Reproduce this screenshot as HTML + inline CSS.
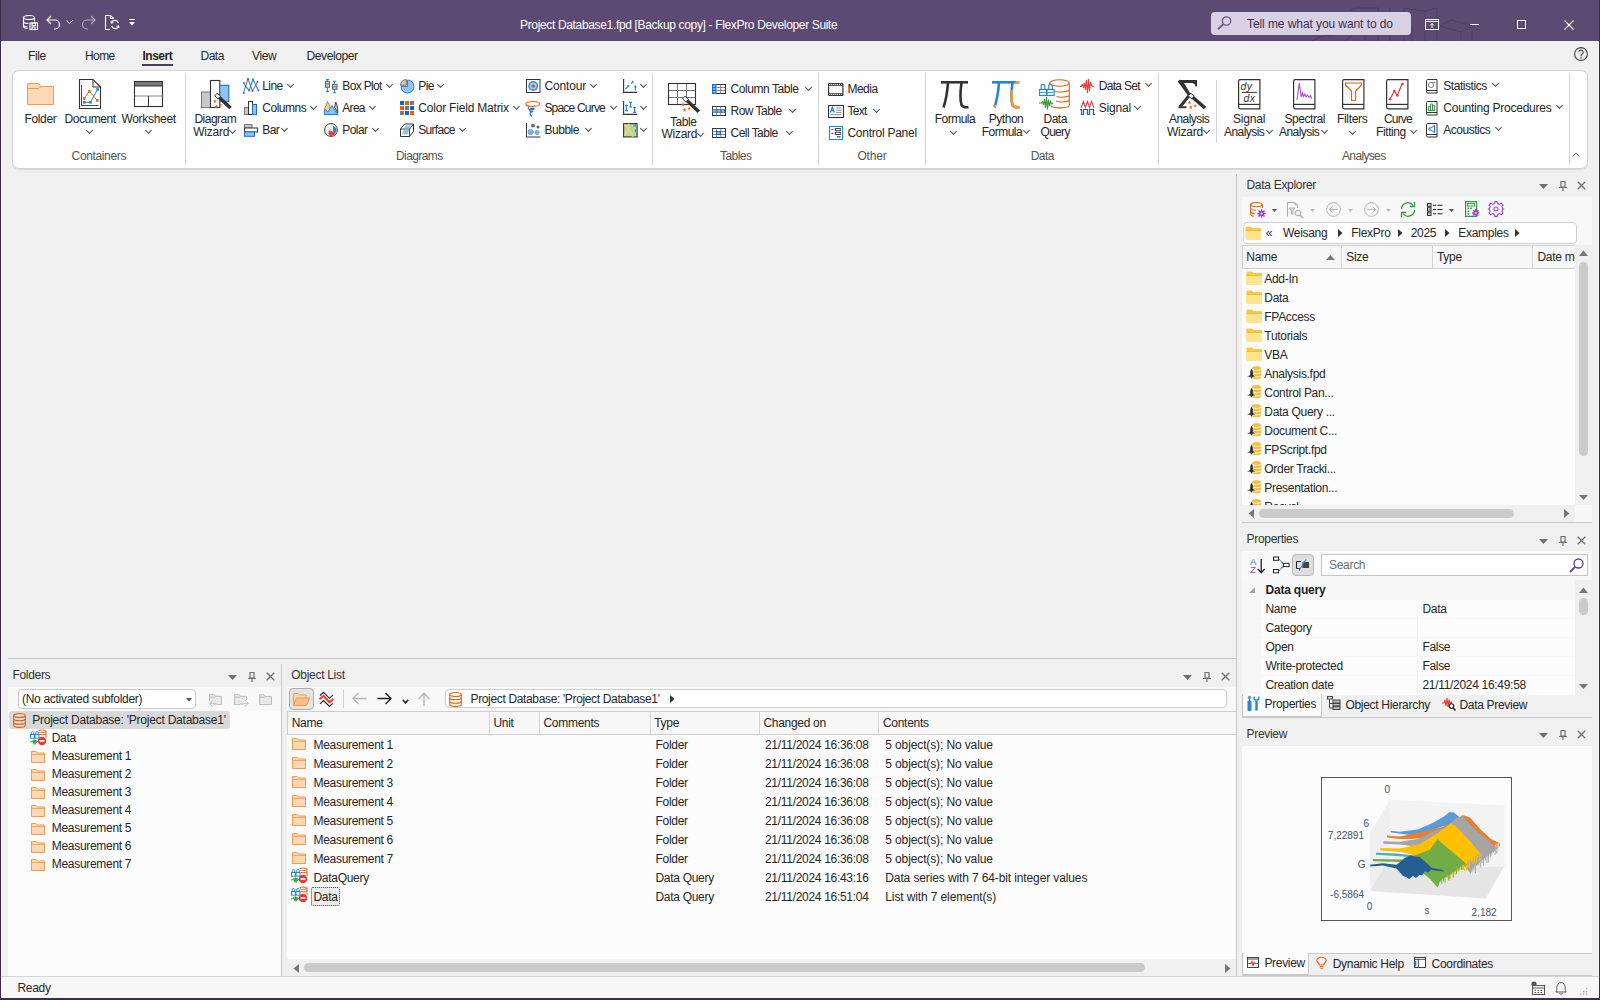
<!DOCTYPE html>
<html><head><meta charset="utf-8">
<style>
*{box-sizing:border-box}
html,body{margin:0;padding:0;width:1600px;height:1000px;overflow:hidden;background:#f0f0f0;font-family:"Liberation Sans",sans-serif;font-size:12px;color:#222}
.a{position:absolute}
.t{position:absolute;white-space:nowrap;font-size:12px;line-height:14px;color:#262626;letter-spacing:-0.3px}
.g{color:#555}
svg{position:absolute;overflow:visible}
.cv{position:absolute;width:5px;height:5px;border-right:1px solid #505050;border-bottom:1px solid #505050;transform:rotate(45deg)}
.hl{position:absolute;height:1px;background:#c9c9c9}
.vl{position:absolute;width:1px;background:#c9c9c9}
</style></head><body>
<!-- TITLE BAR -->
<div class="a" style="left:0;top:0;width:1600px;height:41px;background:#5c4a72"></div>
<!-- window borders -->
<div class="a" style="left:0;top:0;width:1px;height:1000px;background:#3a2c4c;z-index:50"></div>
<div class="a" style="left:1599px;top:0;width:1px;height:1000px;background:#3a2c4c;z-index:50"></div>
<div class="a" style="left:0;top:998px;width:1600px;height:2px;background:#3a2c4c;z-index:50"></div>

<!-- title bar decorations -->
<svg style="left:1300px;top:0px" width="200" height="41" viewBox="0 0 200 41"><g fill="none" stroke="#4c3c62" stroke-width="0.9">
<path d="M12 41 L22 36 L55 33 L45 41"/><path d="M50 10 L58 8 L78 8 L78 41"/><path d="M65 41 V36"/><path d="M90 8 V41"/><path d="M104 8.5 L125 11 L137 8 M104 8.5 V41 M125 11 V41 M137 8 V41"/>
<path d="M140 26 L151 20 L172 26 L161 32 Z M161 32 V41 M172 26 V41"/><path d="M100 30 L112 27 V41"/></g></svg>
<!-- QAT icons -->
<svg style="left:23px;top:15px" width="15" height="15" viewBox="0 0 15 15"><g fill="none" stroke="#fff" stroke-width="1.1"><ellipse cx="6" cy="2.5" rx="5.5" ry="2"/><path d="M0.5 2.5v9c0 1 1.5 1.8 4 2"/><path d="M11.5 2.5v4"/><path d="M0.5 6.5c0 1 2 2 5 2"/><path d="M0.5 10c0 1 2 1.8 4 2"/><rect x="7" y="8" width="7.5" height="6.5"/><rect x="9" y="8" width="3.5" height="2.5"/><rect x="9" y="12" width="3" height="2.5"/></g></svg>
<svg style="left:46px;top:15px" width="15" height="15" viewBox="0 0 15 15"><g fill="none" stroke="#fff" stroke-width="1.2"><path d="M5 1 L1 5 L5 9"/><path d="M1 5 H9 a4.5 4.5 0 0 1 0 9 H8"/></g></svg>
<svg style="left:66px;top:20px" width="7" height="4" viewBox="0 0 7 4"><path d="M0.5 0.5 L3.5 3.5 L6.5 0.5" fill="none" stroke="#fff" stroke-width="1"/></svg>
<svg style="left:81px;top:15px" width="15" height="15" viewBox="0 0 15 15"><g fill="none" stroke="#b1a6c0" stroke-width="1.2"><path d="M10 1 L14 5 L10 9"/><path d="M14 5 H6 a4.5 4.5 0 0 0 0 9 H7"/></g></svg>
<svg style="left:105px;top:15px" width="15" height="15" viewBox="0 0 15 15"><g fill="none" stroke="#fff" stroke-width="1.1"><path d="M5 14.5 H0.5 V0.5 H5.5 L8.5 3.5"/><path d="M5.5 0.5 V3.5 H8.5"/><path d="M13.5 8 a4 4 0 0 0 -7 -1"/><path d="M6 6 L6.5 8 L8.5 7.5"/><path d="M6.5 11 a4 4 0 0 0 7 1"/><path d="M14 13 L13.5 11 L11.5 11.5"/></g></svg>
<svg style="left:129px;top:19px" width="6" height="7" viewBox="0 0 6 7"><rect x="0" y="0" width="6" height="1" fill="#fff"/><path d="M0 3 H6 L3 6.5Z" fill="#fff"/></svg>
<div class="t" style="left:520px;top:18px;color:#fff;letter-spacing:-0.34px">Project Database1.fpd [Backup copy] - FlexPro Developer Suite</div>
<!-- search box -->
<div class="a" style="left:1211px;top:12px;width:200px;height:23px;background:#d8d1e3;border-radius:4px"></div>
<svg style="left:1217px;top:16px" width="15" height="14" viewBox="0 0 15 14"><g fill="none" stroke="#6a5a86" stroke-width="1.3"><circle cx="9.5" cy="5" r="4.2"/><path d="M6.5 8 L1 13.2" stroke-width="1.8"/></g></svg>
<div class="t" style="left:1247px;top:17px;color:#3b2f4e;letter-spacing:-0.08px">Tell me what you want to do</div>
<!-- window buttons -->
<svg style="left:1425px;top:19px" width="14" height="11" viewBox="0 0 14 11"><g fill="none" stroke="#fff" stroke-width="1"><rect x="0.5" y="0.5" width="13" height="10"/><path d="M0.5 2.5 H13.5"/><path d="M7 9 V4.5 M5 6.5 L7 4.5 L9 6.5"/></g></svg>
<div class="a" style="left:1470px;top:24px;width:9px;height:1px;background:#fff"></div>
<div class="a" style="left:1517px;top:20px;width:9px;height:9px;border:1px solid #fff"></div>
<svg style="left:1564px;top:20px" width="10" height="10" viewBox="0 0 10 10"><path d="M0.5 0.5 L9.5 9.5 M9.5 0.5 L0.5 9.5" stroke="#fff" stroke-width="1.1"/></svg>

<!-- RIBBON TABS -->
<div class="a" style="left:1px;top:41px;width:1598px;height:29px;background:#f0f0f0"></div>
<!-- RIBBON BODY -->
<div class="a" style="left:12px;top:70px;width:1576px;height:99px;background:#fefefe;border:1px solid #d2d2d2;border-radius:7px;box-shadow:0 1px 1px rgba(0,0,0,0.10)"></div>

<!-- RIBBON CONTENT -->
<div class="t " style="left:28px;top:49px;letter-spacing:-0.4px">File</div>
<div class="t " style="left:85px;top:49px;letter-spacing:-0.6px">Home</div>
<div class="t " style="left:200.5px;top:49px;letter-spacing:-0.5px">Data</div>
<div class="t " style="left:252px;top:49px;letter-spacing:-0.38px">View</div>
<div class="t " style="left:306.6px;top:49px;letter-spacing:-0.41px">Developer</div>
<div class="t " style="left:142.5px;top:49px;font-weight:bold;letter-spacing:-0.5px">Insert</div>
<div class="t g" style="left:71.6px;top:149px;letter-spacing:-0.36px">Containers</div>
<div class="t g" style="left:396px;top:149px;letter-spacing:-0.6px">Diagrams</div>
<div class="t g" style="left:720px;top:149px;letter-spacing:-0.55px">Tables</div>
<div class="t g" style="left:857.4px;top:149px;letter-spacing:-0.15px">Other</div>
<div class="t g" style="left:1030.7px;top:149px;letter-spacing:-0.5px">Data</div>
<div class="t g" style="left:1342px;top:149px;letter-spacing:-0.65px">Analyses</div>
<div class="t " style="left:24.6px;top:112px;letter-spacing:-0.38px">Folder</div>
<div class="t " style="left:64.6px;top:112px;letter-spacing:-0.45px">Document</div>
<div class="t " style="left:121.4px;top:112px;letter-spacing:-0.3px">Worksheet</div>
<div class="cv" style="left:86.5px;top:127.5px"></div>
<div class="cv" style="left:145.5px;top:127.5px"></div>
<div class="t " style="left:194.4px;top:112px;letter-spacing:-0.5px">Diagram</div>
<div class="t " style="left:193.3px;top:125px;letter-spacing:-0.25px">Wizard</div>
<div class="cv" style="left:230.0px;top:127.5px"></div>
<div class="t " style="left:670px;top:115px;letter-spacing:-0.45px">Table</div>
<div class="t " style="left:661.4px;top:127px;letter-spacing:-0.25px">Wizard</div>
<div class="cv" style="left:698.0px;top:131.0px"></div>
<div class="t " style="left:934.7px;top:112px;letter-spacing:-0.5px">Formula</div>
<div class="cv" style="left:951.0px;top:128.5px"></div>
<div class="t " style="left:988.7px;top:112px;letter-spacing:-0.45px">Python</div>
<div class="t " style="left:981.7px;top:125px;letter-spacing:-0.5px">Formula</div>
<div class="cv" style="left:1024.0px;top:127.5px"></div>
<div class="t " style="left:1043.5px;top:112px;letter-spacing:-0.5px">Data</div>
<div class="t " style="left:1040.5px;top:125px;letter-spacing:-0.7px">Query</div>
<div class="t " style="left:1169px;top:112px;letter-spacing:-0.55px">Analysis</div>
<div class="t " style="left:1167px;top:125px;letter-spacing:-0.25px">Wizard</div>
<div class="cv" style="left:1204.0px;top:127.5px"></div>
<div class="t " style="left:1233px;top:112px;letter-spacing:-0.2px">Signal</div>
<div class="t " style="left:1224px;top:125px;letter-spacing:-0.55px">Analysis</div>
<div class="cv" style="left:1267.0px;top:127.5px"></div>
<div class="t " style="left:1284.4px;top:112px;letter-spacing:-0.44px">Spectral</div>
<div class="t " style="left:1279px;top:125px;letter-spacing:-0.55px">Analysis</div>
<div class="cv" style="left:1322.0px;top:127.5px"></div>
<div class="t " style="left:1337px;top:112px;letter-spacing:-0.34px">Filters</div>
<div class="cv" style="left:1349.5px;top:128.5px"></div>
<div class="t " style="left:1383.9px;top:112px;letter-spacing:-0.8px">Curve</div>
<div class="t " style="left:1376px;top:125px;letter-spacing:-0.4px">Fitting</div>
<div class="cv" style="left:1411.0px;top:127.5px"></div>
<div class="t " style="left:262.3px;top:79px;letter-spacing:-0.6px">Line</div>
<div class="cv" style="left:287.5px;top:81.5px"></div>
<div class="t " style="left:262.3px;top:101px;letter-spacing:-0.5px">Columns</div>
<div class="cv" style="left:311.2px;top:103.5px"></div>
<div class="t " style="left:262.3px;top:123px;letter-spacing:-0.6px">Bar</div>
<div class="cv" style="left:282.3px;top:125.5px"></div>
<div class="t " style="left:342.3px;top:79px;letter-spacing:-0.65px">Box Plot</div>
<div class="cv" style="left:387.1px;top:81.5px"></div>
<div class="t " style="left:342.3px;top:101px;letter-spacing:-0.7px">Area</div>
<div class="cv" style="left:369.5px;top:103.5px"></div>
<div class="t " style="left:342.3px;top:123px;letter-spacing:-0.55px">Polar</div>
<div class="cv" style="left:372.5px;top:125.5px"></div>
<div class="t " style="left:418.3px;top:79px;letter-spacing:-0.6px">Pie</div>
<div class="cv" style="left:437.5px;top:81.5px"></div>
<div class="t " style="left:418.3px;top:101px;letter-spacing:-0.2px">Color Field Matrix</div>
<div class="cv" style="left:513.5px;top:103.5px"></div>
<div class="t " style="left:418.3px;top:123px;letter-spacing:-0.7px">Surface</div>
<div class="cv" style="left:459.5px;top:125.5px"></div>
<div class="t " style="left:544.4px;top:79px;letter-spacing:-0.15px">Contour</div>
<div class="cv" style="left:590.5px;top:81.5px"></div>
<div class="t " style="left:544.4px;top:101px;letter-spacing:-0.8px">Space Curve</div>
<div class="cv" style="left:610.5px;top:103.5px"></div>
<div class="t " style="left:544.4px;top:123px;letter-spacing:-0.45px">Bubble</div>
<div class="cv" style="left:585.5px;top:125.5px"></div>
<div class="cv" style="left:640.5px;top:81.5px"></div>
<div class="cv" style="left:640.5px;top:103.5px"></div>
<div class="cv" style="left:640.5px;top:125.5px"></div>
<div class="t " style="left:730.5px;top:82px;letter-spacing:-0.42px">Column Table</div>
<div class="cv" style="left:805.5px;top:84.5px"></div>
<div class="t " style="left:730.5px;top:104px;letter-spacing:-0.52px">Row Table</div>
<div class="cv" style="left:790.0px;top:106.5px"></div>
<div class="t " style="left:730.5px;top:126px;letter-spacing:-0.53px">Cell Table</div>
<div class="cv" style="left:786.5px;top:128.5px"></div>
<div class="t " style="left:847.4px;top:82px;letter-spacing:-0.48px">Media</div>
<div class="t " style="left:847.4px;top:104px;letter-spacing:-0.7px">Text</div>
<div class="cv" style="left:873.5px;top:106.5px"></div>
<div class="t " style="left:847.4px;top:126px;letter-spacing:-0.25px">Control Panel</div>
<div class="t " style="left:1098.7px;top:78.5px;letter-spacing:-0.68px">Data Set</div>
<div class="cv" style="left:1146.0px;top:81.0px"></div>
<div class="t " style="left:1098.7px;top:101px;letter-spacing:-0.2px">Signal</div>
<div class="cv" style="left:1134.5px;top:103.5px"></div>
<div class="t " style="left:1443.3px;top:78.5px;letter-spacing:-0.45px">Statistics</div>
<div class="cv" style="left:1492.5px;top:81.0px"></div>
<div class="t " style="left:1443.3px;top:100.5px;letter-spacing:-0.24px">Counting Procedures</div>
<div class="cv" style="left:1556.5px;top:103.0px"></div>
<div class="t " style="left:1443.3px;top:122.5px;letter-spacing:-0.48px">Acoustics</div>
<div class="cv" style="left:1495.5px;top:125.0px"></div>
<div class="a" style="left:142px;top:64px;width:31px;height:2px;background:#4b3a66"></div>
<!-- ribbon separators -->
<div class="vl" style="left:185px;top:73px;height:92px;background:#d4d4d4"></div>
<div class="vl" style="left:652px;top:73px;height:92px;background:#d4d4d4"></div>
<div class="vl" style="left:818px;top:73px;height:92px;background:#d4d4d4"></div>
<div class="vl" style="left:925px;top:73px;height:92px;background:#d4d4d4"></div>
<div class="vl" style="left:1158px;top:73px;height:92px;background:#d4d4d4"></div>
<div class="vl" style="left:1216px;top:80px;height:63px;background:#d4d4d4"></div>
<div class="vl" style="left:1569px;top:73px;height:92px;background:#d4d4d4"></div>
<svg style="left:1572px;top:152px" width="8" height="5" viewBox="0 0 8 5"><path d="M0.5 4.5 L4 1 L7.5 4.5" fill="none" stroke="#666" stroke-width="1"/></svg>
<!-- help -->
<svg style="left:1574px;top:47px" width="14" height="14" viewBox="0 0 14 14"><circle cx="7" cy="7" r="6.4" fill="none" stroke="#444" stroke-width="1.1"/><path d="M4.8 5.3 a2.2 2.2 0 1 1 3.3 1.9 c-0.8 0.4 -1.1 0.8 -1.1 1.6 v0.5" fill="none" stroke="#444" stroke-width="1.1"/><circle cx="7" cy="10.8" r="0.8" fill="#444"/></svg>

<!-- Folder -->
<svg style="left:27px;top:83px" width="28" height="22" viewBox="0 0 28 22"><path d="M0.5 0.5 H11.5 L14 3.5 H26.5 V21.5 H0.5 Z" fill="#fdd9b8" stroke="#f5994a" stroke-width="1"/><path d="M0.5 5.5 H11.5 L14 3.5" fill="none" stroke="#f5994a" stroke-width="1"/></svg>
<!-- Document -->
<svg style="left:79px;top:79px" width="22" height="30" viewBox="0 0 22 30"><path d="M0.5 0.5 H14 L21.5 8 V29.5 H0.5 Z" fill="#fff" stroke="#333" stroke-width="1.1"/><path d="M14 0.5 V8 H21.5" fill="none" stroke="#333" stroke-width="1"/><path d="M2.5 6 V26.5 H19.5" fill="none" stroke="#333" stroke-width="0.9"/><polyline points="5.3,19.5 10.4,12.4 18.3,21.4" fill="none" stroke="#e06a1b" stroke-width="1"/><polyline points="5.3,23.3 11.3,23.3 18.6,10.4" fill="none" stroke="#1e88d6" stroke-width="1"/><g fill="#e06a1b"><rect x="4" y="18.2" width="2.6" height="2.6"/><rect x="9.1" y="11.1" width="2.6" height="2.6"/><rect x="17" y="20.1" width="2.6" height="2.6"/></g><g fill="#1e88d6"><rect x="4" y="22" width="2.6" height="2.6"/><rect x="10" y="22" width="2.6" height="2.6"/><rect x="17.3" y="9.1" width="2.6" height="2.6"/></g></svg>
<!-- Worksheet -->
<svg style="left:134px;top:81px" width="30" height="26" viewBox="0 0 30 26"><rect x="0.5" y="0.5" width="28" height="25" fill="#fff" stroke="#333" stroke-width="1.1"/><rect x="0.5" y="0.5" width="28" height="4.5" fill="#777" stroke="#333" stroke-width="1"/><path d="M1 15 H28.5" stroke="#9a9a9a" stroke-width="1.2"/><path d="M14.5 15 V25.5" stroke="#333" stroke-width="1"/></svg>

<!-- Diagram Wizard -->
<svg style="left:201px;top:80px" width="36" height="30" viewBox="0 0 36 30"><rect x="0.5" y="12" width="9" height="15.5" fill="#c8c8c8" stroke="#777" stroke-width="1"/><rect x="9.5" y="0.5" width="9.3" height="27" fill="#fff" stroke="#333" stroke-width="1.1"/><rect x="18.8" y="5.3" width="9" height="16" fill="#93c2ec" stroke="#1a6fc4" stroke-width="1.1"/><polygon points="13.77,15.82 16.23,13.18 30.73,26.68 28.27,29.32" fill="#333"/><polygon points="13.77,15.82 16.23,13.18 19.42,16.15 16.96,18.79" fill="#fff" stroke="#333" stroke-width="0.9"/><g fill="#e46c1e"><polygon points="14.00,19.27 14.54,20.56 15.93,20.67 14.87,21.58 15.19,22.94 14.00,22.21 12.81,22.94 13.13,21.58 12.07,20.67 13.46,20.56"/><polygon points="15.30,24.43 15.88,25.81 17.37,25.93 16.23,26.90 16.58,28.36 15.30,27.58 14.02,28.36 14.37,26.90 13.23,25.93 14.72,25.81"/><polygon points="19.60,23.31 20.10,24.51 21.39,24.62 20.41,25.46 20.71,26.72 19.60,26.05 18.49,26.72 18.79,25.46 17.81,24.62 19.10,24.51"/></g></svg>
<!-- Line -->
<svg style="left:243px;top:78px" width="17" height="16" viewBox="0 0 17 16"><polyline points="0.5,15 5,0.7 9.5,13 14.5,4" fill="none" stroke="#666" stroke-width="1"/><polyline points="0.5,5 6,12.5 10,1.5 15.5,12.5" fill="none" stroke="#1e88d6" stroke-width="1.1"/><g fill="#1e88d6"><circle cx="0.8" cy="5" r="1"/><circle cx="6" cy="12.5" r="1"/><circle cx="10" cy="1.5" r="1"/><circle cx="15.5" cy="12.5" r="1"/></g><g fill="#555"><circle cx="0.8" cy="15" r="0.9"/><circle cx="9.5" cy="13" r="0.9"/><circle cx="14.5" cy="4" r="0.9"/><circle cx="5" cy="0.8" r="0.9"/></g></svg>
<!-- Columns -->
<svg style="left:244px;top:101px" width="13" height="14" viewBox="0 0 13 14"><rect x="0.5" y="6.5" width="4" height="7" fill="#c8c8c8" stroke="#777" stroke-width="1"/><rect x="4.5" y="0.5" width="4" height="13" fill="#fff" stroke="#333" stroke-width="1"/><rect x="8.5" y="3.5" width="4" height="10" fill="#93c2ec" stroke="#1a6fc4" stroke-width="1"/></svg>
<!-- Bar -->
<svg style="left:244px;top:124px" width="14" height="13" viewBox="0 0 14 13"><rect x="0.5" y="0.5" width="7.5" height="3.5" fill="#c8c8c8" stroke="#777" stroke-width="1"/><rect x="0.5" y="4" width="13" height="4" fill="#fff" stroke="#333" stroke-width="1"/><rect x="0.5" y="8" width="10" height="4.3" fill="#93c2ec" stroke="#1a6fc4" stroke-width="1"/></svg>
<!-- Box Plot -->
<svg style="left:325px;top:79px" width="13" height="15" viewBox="0 0 13 15"><g stroke="#1e88d6" stroke-width="1"><path d="M2.4 0 V12.5 M1 0.5 H4 M1 12.5 H4"/><path d="M9.6 2 V14 M8 2.3 H11 M8 13.8 H11"/></g><rect x="0.5" y="2.3" width="4" height="6" fill="#c8c8c8" stroke="#666" stroke-width="1"/><rect x="7.5" y="5.3" width="4.5" height="5" fill="#c8c8c8" stroke="#666" stroke-width="1"/><path d="M0.5 5 H4.5 M7.5 7.8 H12" stroke="#666" stroke-width="0.8"/></svg>
<!-- Area -->
<svg style="left:324px;top:101px" width="15" height="14" viewBox="0 0 15 14"><path d="M0.5 8 L3.5 0.5 L6 5.5 L6 12 L0.5 12Z" fill="#f8d28a" stroke="#e46c1e" stroke-width="0.9"/><path d="M10.5 6 L11.8 1 L13.5 6 L13.8 12 Z" fill="#ccc" stroke="#333" stroke-width="0.9"/><path d="M0.5 13.5 V8 L4 11 L8 4.5 L13.5 13.5 Z" fill="#93c2ec" stroke="#1e88d6" stroke-width="1"/><path d="M0 13.5 H14.5" stroke="#1e88d6" stroke-width="1.2"/></svg>
<!-- Polar -->
<svg style="left:324px;top:123px" width="15" height="15" viewBox="0 0 15 15"><circle cx="7" cy="7" r="6.4" fill="#fff" stroke="#333" stroke-width="1"/><path d="M7 1 V7 M1 7 H7 M7 7 L3 2.8" stroke="#bbb" stroke-width="0.6"/><path d="M5 7.6 C6 7 7.5 8.5 9 8.6 C10.5 8.8 11 9.2 11.8 9.5 C11 12 9 13 7 13 C5.5 13 4 11.5 4.5 9 Z" fill="#e63b3b"/><path d="M9 3 C11 3.5 12.5 5 12.6 7.5 L11.8 9.5 C11 9.2 10 8.8 9 8.6 Z" fill="#1e88d6"/></svg>
<!-- Pie -->
<svg style="left:400px;top:79px" width="15" height="15" viewBox="0 0 15 15"><path d="M7.5 1 A6.5 6.5 0 1 1 1 7.5 H7.5 Z" fill="#93c2ec" stroke="#1e88d6" stroke-width="1"/><path d="M6.3 0.5 V6.3 H0.5 A5.8 5.8 0 0 1 6.3 0.5Z" fill="#c8c8c8" stroke="#666" stroke-width="0.9"/></svg>
<!-- Color Field Matrix -->
<svg style="left:400px;top:101px" width="14" height="14" viewBox="0 0 14 14"><g><rect x="0" y="0" width="4" height="4" fill="#1565c0"/><rect x="5" y="0" width="4" height="4" fill="#e0620f"/><rect x="10" y="0" width="4" height="4" fill="#7a7a7a"/><rect x="0" y="5" width="4" height="4" fill="#e0620f"/><rect x="5" y="5" width="4" height="4" fill="#7a7a7a"/><rect x="10" y="5" width="4" height="4" fill="#1565c0"/><rect x="0" y="10" width="4" height="4" fill="#7a7a7a"/><rect x="5" y="10" width="4" height="4" fill="#1565c0"/><rect x="10" y="10" width="4" height="4" fill="#e0620f"/></g></svg>
<!-- Surface -->
<svg style="left:400px;top:123px" width="15" height="15" viewBox="0 0 15 15"><path d="M0.5 13.5 V6 L4.5 1 H13.5 V8.5 L9.5 13.5 Z" fill="#fff" stroke="#333" stroke-width="1"/><path d="M0.5 6 H9.5 L13.5 1 M9.5 6 V13.5" fill="none" stroke="#333" stroke-width="0.9"/><path d="M2 11.5 L3.5 7 H9 L7.5 11.5Z" fill="#93c2ec"/><path d="M4 5 L6 2.5 H12 L10 5Z" fill="#93c2ec"/></svg>
<!-- Contour -->
<svg style="left:526px;top:79px" width="15" height="14" viewBox="0 0 15 14"><rect x="0.5" y="0.5" width="13.5" height="13" fill="#fff" stroke="#333" stroke-width="1"/><circle cx="7.2" cy="7" r="5" fill="#3d93dc"/><circle cx="7.2" cy="7" r="3.4" fill="#9ccbf0"/><circle cx="7.2" cy="7" r="1.6" fill="#e63b3b"/></svg>
<!-- Space Curve -->
<svg style="left:525px;top:101px" width="16" height="16" viewBox="0 0 16 16"><ellipse cx="7.8" cy="3" rx="6.9" ry="2.5" fill="none" stroke="#e46c1e" stroke-width="1.2"/><path d="M1.3 3.8 C2.5 6.2 10.5 6.5 9.5 4.3" fill="none" stroke="#e46c1e" stroke-width="1.1"/><path d="M3.5 6.2 C2 9 9.5 9.8 9 7.5 C5 7 3 10 6.5 10.8 C8.5 11 8 9.8 5.8 11.2 C4.5 12.5 5 14 7 15.5" fill="none" stroke="#1e6fc8" stroke-width="1.2"/></svg>
<!-- Bubble -->
<svg style="left:526px;top:123px" width="15" height="15" viewBox="0 0 15 15"><path d="M0.5 0 V14 H14.5" fill="none" stroke="#333" stroke-width="1"/><circle cx="7" cy="2.6" r="1.9" fill="#666"/><circle cx="12" cy="4" r="1.5" fill="#666"/><circle cx="4.7" cy="9" r="2.6" fill="#7ab3e8" stroke="#3a8ad8" stroke-width="0.6"/><circle cx="11" cy="9.5" r="2.1" fill="#7ab3e8" stroke="#3a8ad8" stroke-width="0.6"/></svg>
<!-- small col -->
<svg style="left:623px;top:79px" width="15" height="14" viewBox="0 0 15 14"><path d="M0.6 0 V13.4 H14.2" fill="none" stroke="#333" stroke-width="1.1"/><g stroke="#1e88d6" stroke-width="1.1" fill="none"><path d="M2.3 10 L5.6 6.9"/><path d="M8.6 5 L9.6 2.4"/><path d="M12.4 11.5 V7.5"/></g><g fill="#1e88d6"><path d="M6.6 6 L3.8 6.6 L5.9 8.6Z"/><path d="M10 1.3 L8.2 3.2 L10.6 3.8Z"/><path d="M12.4 6 L10.8 8.3 H14Z"/></g></svg>
<svg style="left:623px;top:101px" width="15" height="14" viewBox="0 0 15 14"><path d="M0.6 0 V13.4 H14.2" fill="none" stroke="#333" stroke-width="1.1"/><g stroke="#1e88d6" stroke-width="1.2" fill="none"><path d="M3.5 4.2 V9.8 M2 4.3 H5 M2 9.7 H5"/><path d="M7.6 1.2 V6.1 M6.1 1.3 H9.1 M6.1 6 H9.1"/><path d="M11.6 6.5 V11.4 M10.1 6.6 H13.1 M10.1 11.3 H13.1"/></g></svg>
<svg style="left:623px;top:123px" width="15" height="15" viewBox="0 0 15 15"><rect x="0.6" y="0.6" width="13.5" height="13.3" fill="#a8dca8" stroke="#333" stroke-width="1.1"/><path d="M1.5 1.5 C4 4 8 8 10 13.8" fill="none" stroke="#f2d27a" stroke-width="1.9"/><path d="M6 0.8 C5 5 3.5 9 1.9 13" fill="none" stroke="#f2d27a" stroke-width="1.9"/><rect x="10.4" y="1.2" width="3.2" height="2.4" fill="#888"/><rect x="11.6" y="6.5" width="2.1" height="2.4" fill="#888"/></svg>

<!-- Table Wizard -->
<svg style="left:668px;top:83px" width="32" height="30" viewBox="0 0 32 30"><rect x="0.5" y="0.5" width="27" height="21" fill="#fff" stroke="#333" stroke-width="1.1"/><path d="M9.5 1 V21 M18.5 1 V14 M1 7.5 H27 M1 14.5 H27" stroke="#777" stroke-width="1"/><polygon points="14.56,15.80 17.04,13.20 32.04,27.50 29.56,30.10" fill="#333"/><polygon points="14.56,15.80 17.04,13.20 20.34,16.34 17.86,18.95" fill="#fff" stroke="#333" stroke-width="0.9"/><g fill="#e46c1e"><polygon points="15.00,19.47 15.54,20.76 16.93,20.87 15.87,21.78 16.19,23.14 15.00,22.41 13.81,23.14 14.13,21.78 13.07,20.87 14.46,20.76"/><polygon points="16.50,24.82 17.08,26.21 18.57,26.33 17.43,27.30 17.78,28.76 16.50,27.98 15.22,28.76 15.57,27.30 14.43,26.33 15.92,26.21"/><polygon points="21.00,23.61 21.50,24.81 22.79,24.92 21.81,25.76 22.11,27.02 21.00,26.35 19.89,27.02 20.19,25.76 19.21,24.92 20.50,24.81"/></g></svg>
<!-- Column/Row/Cell Table -->
<svg style="left:712px;top:84px" width="14" height="10" viewBox="0 0 14 10"><rect x="0.5" y="0.5" width="13" height="9" fill="#fff" stroke="#333" stroke-width="1"/><rect x="0" y="0" width="4.5" height="10" fill="#1a6fc4"/><path d="M4.5 3.5 H13 M4.5 6.5 H13 M8.7 0.5 V9.5" stroke="#777" stroke-width="0.9"/><g fill="#9ccbf0"><rect x="1.2" y="1.3" width="2.2" height="1.6"/><rect x="1.2" y="4.2" width="2.2" height="1.6"/><rect x="1.2" y="7.1" width="2.2" height="1.6"/></g></svg>
<svg style="left:712px;top:106px" width="14" height="10" viewBox="0 0 14 10"><rect x="0.5" y="0.5" width="13" height="9" fill="#fff" stroke="#333" stroke-width="1"/><rect x="0" y="3.2" width="13.5" height="3.6" fill="#1a6fc4"/><path d="M4.5 0.5 V9.5 M8.7 0.5 V9.5" stroke="#777" stroke-width="0.9"/><g fill="#9ccbf0"><rect x="1.2" y="4.2" width="2.4" height="1.6"/><rect x="5.5" y="4.2" width="2.4" height="1.6"/><rect x="9.7" y="4.2" width="2.4" height="1.6"/></g></svg>
<svg style="left:712px;top:128px" width="14" height="10" viewBox="0 0 14 10"><rect x="0.5" y="0.5" width="13" height="9" fill="#fff" stroke="#333" stroke-width="1"/><path d="M4.5 0.5 V9.5 M8.7 0.5 V9.5 M0.5 3.5 H13 M0.5 6.5 H13" stroke="#777" stroke-width="0.9"/><rect x="4" y="3" width="5" height="4" fill="#1a6fc4"/><rect x="5.2" y="4.1" width="2.6" height="1.8" fill="#9ccbf0"/></svg>
<!-- Media -->
<svg style="left:828px;top:83px" width="16" height="13" viewBox="0 0 16 13"><rect x="0" y="0" width="15.5" height="13" rx="1" fill="#333"/><rect x="1.2" y="2.8" width="13.1" height="7.4" fill="#fff"/><rect x="1.30" y="0.9" width="1.1" height="1.1" fill="#fff"/><rect x="1.30" y="10.9" width="1.1" height="1.1" fill="#fff"/><rect x="3.25" y="0.9" width="1.1" height="1.1" fill="#fff"/><rect x="3.25" y="10.9" width="1.1" height="1.1" fill="#fff"/><rect x="5.20" y="0.9" width="1.1" height="1.1" fill="#fff"/><rect x="5.20" y="10.9" width="1.1" height="1.1" fill="#fff"/><rect x="7.15" y="0.9" width="1.1" height="1.1" fill="#fff"/><rect x="7.15" y="10.9" width="1.1" height="1.1" fill="#fff"/><rect x="9.10" y="0.9" width="1.1" height="1.1" fill="#fff"/><rect x="9.10" y="10.9" width="1.1" height="1.1" fill="#fff"/><rect x="11.05" y="0.9" width="1.1" height="1.1" fill="#fff"/><rect x="11.05" y="10.9" width="1.1" height="1.1" fill="#fff"/><rect x="13.00" y="0.9" width="1.1" height="1.1" fill="#fff"/><rect x="13.00" y="10.9" width="1.1" height="1.1" fill="#fff"/></svg>
<!-- Text -->
<svg style="left:828px;top:105px" width="16" height="13" viewBox="0 0 16 13"><rect x="0.5" y="0.5" width="15" height="12" fill="#fff" stroke="#333" stroke-width="1.1"/><path d="M2.3 7.5 L4.3 2.3 L6.3 7.5 M3.1 5.6 H5.5" fill="none" stroke="#1e88d6" stroke-width="1.3"/><path d="M8.2 3 H13.5 M8.2 5.2 H13.5 M8.2 7.4 H13.5 M2.3 9.7 H13.5" stroke="#666" stroke-width="0.75"/></svg>
<!-- Control panel -->
<svg style="left:829px;top:126px" width="14" height="14" viewBox="0 0 14 14"><rect x="0.5" y="0.5" width="13" height="13" fill="#fff" stroke="#1e88d6" stroke-width="1.1"/><path d="M2.5 3.5 H4.5 M2.5 7.5 H4.5" stroke="#333" stroke-width="0.9"/><rect x="6.3" y="2.5" width="5" height="2.2" fill="none" stroke="#333" stroke-width="0.9"/><rect x="6.3" y="6.3" width="5" height="2.2" fill="none" stroke="#333" stroke-width="0.9"/><rect x="8" y="10" width="3.5" height="1.7" fill="#777"/></svg>

<!-- Formula pi -->
<svg style="left:940px;top:80px" width="31" height="29" viewBox="0 0 31 29"><path d="M1 2.3 H28" stroke="#333" stroke-width="2.6"/><path d="M8 2.5 C7.5 10 6 20 3.5 27.5" fill="none" stroke="#333" stroke-width="2.6"/><path d="M21.5 2.5 C20.5 10 20 20 21.5 25 C22.5 27.5 25 27.5 28.5 27.2" fill="none" stroke="#333" stroke-width="2.6"/></svg>
<!-- Python pi -->
<svg style="left:991px;top:80px" width="31" height="29" viewBox="0 0 31 29"><defs><clipPath id="pyl"><polygon points="0,29 0,26 9,23.5 9,29"/></clipPath><clipPath id="pyr"><polygon points="14,13 31,5 31,29 14,29"/></clipPath></defs><path d="M1 2.3 H28" stroke="#1e88d6" stroke-width="2.6"/><path d="M25 1 H28.5 V3.6 H23Z" fill="#f6953a"/><path d="M8 2.5 C7.5 10 6 20 3.5 27.5" fill="none" stroke="#1e88d6" stroke-width="2.6"/><path d="M8 2.5 C7.5 10 6 20 3.5 27.5" fill="none" stroke="#f6953a" stroke-width="2.6" clip-path="url(#pyl)"/><path d="M21.5 2.5 C20.5 10 20 20 21.5 25 C22.5 27.5 25 27.5 28.5 27.2" fill="none" stroke="#1e88d6" stroke-width="2.6"/><path d="M21.5 2.5 C20.5 10 20 20 21.5 25 C22.5 27.5 25 27.5 28.5 27.2" fill="none" stroke="#f6953a" stroke-width="2.6" clip-path="url(#pyr)"/></svg>
<!-- Data Query -->
<svg style="left:1039px;top:79px" width="32" height="31" viewBox="0 0 32 31"><g fill="none" stroke="#e0620f" stroke-width="1.1"><ellipse cx="20.5" cy="4" rx="9.8" ry="3.3"/><path d="M10.7 4 V8 M30.3 4 V26 C30.3 29.5 14 30 11.5 26.5"/><path d="M13 12 C16 13.5 26 13.5 30.3 11.5"/><path d="M17.5 17.5 C20 18.5 26 18.5 30.3 17"/><path d="M17 22 C20 23.5 26 23.5 30.3 21.5"/></g><g fill="#fff" stroke="#1e88d6" stroke-width="1.1"><path d="M2.2 10.5 V6.5 C2.2 5.3 5.8 5.3 5.8 6.5 V10.5 M9.7 10.5 V6.5 C9.7 5.3 13.3 5.3 13.3 6.5 V10.5"/><rect x="0.6" y="10.5" width="7" height="6"/><rect x="8.1" y="10.5" width="7" height="6"/></g><path d="M1 13.5 H7 M8.5 13.5 H14.5" stroke="#1e88d6" stroke-width="0.8"/><polyline points="0,24 2.5,24 3.5,22.5 4.5,26 5.5,20 6.5,29 7.5,18 8.5,30.5 9.5,20.5 10.5,27 11.5,22.5 12.5,25 14,24" fill="none" stroke="#3a9a3f" stroke-width="1.1"/></svg>
<!-- Data Set -->
<svg style="left:1080px;top:79px" width="15" height="15" viewBox="0 0 15 15"><polyline points="0,7.4 1.4,7.4 2.4,5.2 3.4,8.6 4.4,4.2 5.4,10.8 6.4,1.2 7.5,13.6 8.5,0.4 9.5,11.6 10.5,3.2 11.6,6.4 12.8,7.4 13.8,7.4" fill="none" stroke="#e63b3b" stroke-width="1.1" stroke-linejoin="round"/></svg>
<!-- Signal -->
<svg style="left:1080px;top:101px" width="15" height="15" viewBox="0 0 15 15"><polyline points="1.2,6.6 3.4,0.4 5.4,6.6 7.5,0.4 9.5,6.6 11.6,0.4 13.8,6.6" fill="none" stroke="#e63b3b" stroke-width="1.1"/><path d="M0 8.5 H1.5 V13.5 H3.5 V8.5 H7.5 V13.5 H9.5 V8.5 H13.5 V13.5 H15" fill="none" stroke="#1a5fb4" stroke-width="1.2"/></svg>

<!-- Analysis Wizard sigma -->
<svg style="left:1178px;top:80px" width="30" height="30" viewBox="0 0 30 30"><path d="M0.5 0 H19 V6.5 H17.5 C17 4 16 3 13 3 H6 L12 13" fill="#333"/><path d="M1 0.5 L11.5 15 L2 27" fill="none" stroke="#333" stroke-width="3"/><path d="M0.5 26.3 H8.5 V28.2 H0.5Z" fill="#333"/><polygon points="10.32,15.86 12.68,13.14 28.18,26.64 25.82,29.36" fill="#333"/><polygon points="10.32,15.86 12.68,13.14 16.09,16.11 13.73,18.83" fill="#fff" stroke="#333" stroke-width="0.9"/><g fill="#e46c1e"><polygon points="11.50,20.47 12.04,21.76 13.43,21.87 12.37,22.78 12.69,24.14 11.50,23.41 10.31,24.14 10.63,22.78 9.57,21.87 10.96,21.76"/><polygon points="12.80,25.12 13.38,26.51 14.87,26.63 13.73,27.60 14.08,29.06 12.80,28.28 11.52,29.06 11.87,27.60 10.73,26.63 12.22,26.51"/><polygon points="17.30,24.11 17.80,25.31 19.09,25.42 18.11,26.26 18.41,27.52 17.30,26.85 16.19,27.52 16.49,26.26 15.51,25.42 16.80,25.31"/></g></svg>
<!-- Analyses books -->
<svg style="left:1238px;top:79px" width="23" height="31" viewBox="0 0 23 31"><path d="M2 0.6 H21.9 V29.9 H2.5 C1.3 29.9 0.6 29 0.6 27.5 V2 C0.6 1.2 1.2 0.6 2 0.6Z" fill="#fff" stroke="#333" stroke-width="1.2"/><path d="M0.8 25.4 H21.9" stroke="#333" stroke-width="1.2"/><text x="2.6" y="11.3" font-family="Liberation Sans" font-style="italic" font-size="10.5" fill="#333" letter-spacing="0.3">dy</text><path d="M4 13.4 H18.8" stroke="#333" stroke-width="1"/><text x="5.6" y="22.6" font-family="Liberation Sans" font-style="italic" font-size="10.5" fill="#333" letter-spacing="0.3">dx</text></svg>
<svg style="left:1293px;top:79px" width="23" height="31" viewBox="0 0 23 31"><path d="M2 0.6 H21.9 V29.9 H2.5 C1.3 29.9 0.6 29 0.6 27.5 V2 C0.6 1.2 1.2 0.6 2 0.6Z" fill="#fff" stroke="#333" stroke-width="1.2"/><path d="M0.8 25.4 H21.9" stroke="#333" stroke-width="1.2"/><polyline points="4,21 6.3,4 8.2,18 9.5,14 10.5,17.5 11.8,15 13,18 14.5,16 16,18.5 17.5,16.5 19,20" fill="none" stroke="#b04fc8" stroke-width="1.1"/></svg>
<svg style="left:1342px;top:79px" width="23" height="31" viewBox="0 0 23 31"><path d="M2 0.6 H21.9 V29.9 H2.5 C1.3 29.9 0.6 29 0.6 27.5 V2 C0.6 1.2 1.2 0.6 2 0.6Z" fill="#fff" stroke="#333" stroke-width="1.2"/><path d="M0.8 25.4 H21.9" stroke="#333" stroke-width="1.2"/><path d="M3.5 4 H19.5 V6 L13.5 12 V21.5 H9.5 V12 L3.5 6Z" fill="none" stroke="#e0620f" stroke-width="1.2"/></svg>
<svg style="left:1386px;top:79px" width="23" height="31" viewBox="0 0 23 31"><path d="M2 0.6 H21.9 V29.9 H2.5 C1.3 29.9 0.6 29 0.6 27.5 V2 C0.6 1.2 1.2 0.6 2 0.6Z" fill="#fff" stroke="#333" stroke-width="1.2"/><path d="M0.8 25.4 H21.9" stroke="#333" stroke-width="1.2"/><polyline points="4,20.3 8.3,12 11.3,16.5 16,5" fill="none" stroke="#e63b3b" stroke-width="1.2"/><g fill="#e63b3b"><circle cx="4" cy="20.3" r="1.3"/><circle cx="8.3" cy="12" r="1.3"/><circle cx="11.3" cy="16.5" r="1.3"/><circle cx="16.5" cy="5" r="1.3"/></g></svg>
<!-- small books -->
<svg style="left:1426px;top:79px" width="12" height="15" viewBox="0 0 12 15"><path d="M1.5 0.5 H11 V14 H2 C1 14 0.5 13.5 0.5 12.5 V1.5 C0.5 1 1 0.5 1.5 0.5Z" fill="#fff" stroke="#333" stroke-width="1"/><path d="M0.5 11.5 H11" stroke="#333" stroke-width="1"/><circle cx="5" cy="6" r="2.6" fill="none" stroke="#888" stroke-width="1"/><path d="M5 3.4 H9.5" stroke="#888" stroke-width="1"/></svg>
<svg style="left:1426px;top:101px" width="12" height="15" viewBox="0 0 12 15"><path d="M1.5 0.5 H11 V14 H2 C1 14 0.5 13.5 0.5 12.5 V1.5 C0.5 1 1 0.5 1.5 0.5Z" fill="#fff" stroke="#333" stroke-width="1"/><path d="M0.5 11.5 H11" stroke="#333" stroke-width="1"/><path d="M2.5 9.5 V5.5 H4.5 V9.5 M4.5 9.5 V3 H6.5 V9.5 M6.5 9.5 V4.5 H8.5 V9.5 M2 9.5 H9" fill="none" stroke="#2e9a3a" stroke-width="0.9"/></svg>
<svg style="left:1426px;top:123px" width="12" height="15" viewBox="0 0 12 15"><path d="M1.5 0.5 H11 V14 H2 C1 14 0.5 13.5 0.5 12.5 V1.5 C0.5 1 1 0.5 1.5 0.5Z" fill="#fff" stroke="#333" stroke-width="1"/><path d="M0.5 11.5 H11" stroke="#333" stroke-width="1"/><path d="M3 5 H5 L8.5 2.5 V9.5 L5 7 H3Z" fill="none" stroke="#1a6fc4" stroke-width="1"/></svg>

<!-- splitters -->
<div class="vl" style="left:1236px;top:174px;height:802px;background:#c6c6c6"></div>
<div class="hl" style="left:8px;top:658px;width:1228px;background:#c6c6c6"></div>
<div class="vl" style="left:281px;top:664px;height:312px;background:#c6c6c6"></div>

<!-- RIGHT DOCK -->
<div class="t " style="left:1246.5px;top:178px;color:#333">Data Explorer</div>
<svg style="left:1539px;top:184px" width="9" height="5" viewBox="0 0 9 5"><path d="M0 0 H9 L4.5 5Z" fill="#6e6e6e"/></svg>
<svg style="left:1559px;top:181px" width="8" height="10" viewBox="0 0 8 10"><path d="M2 0.5 H6 V6 H2Z M0 6.5 H8 M4 6.5 V10" fill="none" stroke="#6e6e6e" stroke-width="1.2"/></svg>
<svg style="left:1577px;top:181px" width="9" height="9" viewBox="0 0 9 9"><path d="M0.7 0.7 L8.3 8.3 M8.3 0.7 L0.7 8.3" stroke="#6e6e6e" stroke-width="1.3"/></svg>
<div class="a" style="left:1242px;top:197px;width:350px;height:48px;background:#f8f8f8"></div>
<svg style="left:1250px;top:202px" width="16" height="16" viewBox="0 0 16 16"><g fill="none" stroke="#e0620f" stroke-width="1.1"><ellipse cx="6.5" cy="2.6" rx="5.8" ry="2.1"/><path d="M0.7 2.6 V12.5 C0.7 13.5 2 14 4 14.3 M12.3 2.6 V6"/><path d="M0.7 6.5 C1 7.8 3.5 8.3 6 8.3 M0.7 10 C1 11 2.5 11.5 4.5 11.6"/></g><g fill="#a642c8"><circle cx="11.5" cy="11.5" r="2.8"/><path d="M11.5 7.2 V15.8 M7.2 11.5 H15.8 M8.5 8.5 L14.5 14.5 M14.5 8.5 L8.5 14.5" stroke="#a642c8" stroke-width="1.4"/></g><circle cx="11.5" cy="11.5" r="1" fill="#f8f8f8"/></svg>
<svg style="left:1272px;top:209px" width="5" height="3" viewBox="0 0 5 3"><path d="M0 0 H5 L2.5 3Z" fill="#555"/></svg>
<svg style="left:1287px;top:202px" width="17" height="16" viewBox="0 0 17 16"><g fill="none" stroke="#aaa" stroke-width="1"><path d="M0.5 14.5 V0.5 H8 L10.5 3 V6"/><path d="M8 0.5 V3 H10.5"/><path d="M2.5 6 H8 L6 8.5 V12 H4.5 V8.5Z"/><circle cx="11" cy="11" r="2.8"/><path d="M13 13 L16 16" stroke-width="1.4"/></g></svg>
<svg style="left:1310px;top:209px" width="5" height="3" viewBox="0 0 5 3"><path d="M0 0 H5 L2.5 3Z" fill="#bbb"/></svg>
<svg style="left:1326px;top:202px" width="15" height="15" viewBox="0 0 15 15"><circle cx="7.5" cy="7.5" r="6.9" fill="none" stroke="#b5b5b5" stroke-width="1"/><path d="M11.5 7.5 H3.5 M6.5 4.5 L3.5 7.5 L6.5 10.5" fill="none" stroke="#b5b5b5" stroke-width="1"/></svg>
<svg style="left:1348px;top:209px" width="5" height="3" viewBox="0 0 5 3"><path d="M0 0 H5 L2.5 3Z" fill="#bbb"/></svg>
<svg style="left:1364px;top:202px" width="15" height="15" viewBox="0 0 15 15"><circle cx="7.5" cy="7.5" r="6.9" fill="none" stroke="#b5b5b5" stroke-width="1"/><path d="M3.5 7.5 H11.5 M8.5 4.5 L11.5 7.5 L8.5 10.5" fill="none" stroke="#b5b5b5" stroke-width="1"/></svg>
<svg style="left:1386px;top:209px" width="5" height="3" viewBox="0 0 5 3"><path d="M0 0 H5 L2.5 3Z" fill="#bbb"/></svg>
<svg style="left:1400px;top:201px" width="16" height="17" viewBox="0 0 16 17"><g fill="none" stroke="#2e9a3a" stroke-width="1.3"><path d="M1.5 8 A6.3 6.3 0 0 1 13 4.5"/><path d="M14.5 1 V5.5 H10"/><path d="M14.5 9 A6.3 6.3 0 0 1 3 12.5"/><path d="M1.5 16 V11.5 H6"/></g></svg>
<svg style="left:1427px;top:203px" width="16" height="13" viewBox="0 0 16 13"><g fill="#fff" stroke="#222" stroke-width="1"><rect x="0.5" y="0.5" width="3.5" height="3.3"/><rect x="0.5" y="4.8" width="3.5" height="3.3"/><rect x="0.5" y="9.1" width="3.5" height="3.3"/></g><g fill="#1e88d6"><rect x="1.6" y="1.6" width="1.3" height="1.2"/><rect x="1.6" y="5.9" width="1.3" height="1.2"/><rect x="1.6" y="10.2" width="1.3" height="1.2"/></g><path d="M6 2.2 H9 M10.5 2.2 H15.5 M6 6.5 H9 M10.5 6.5 H15.5 M6 10.8 H9 M10.5 10.8 H15.5" stroke="#222" stroke-width="1.1"/></svg>
<svg style="left:1449px;top:209px" width="5" height="3" viewBox="0 0 5 3"><path d="M0 0 H5 L2.5 3Z" fill="#555"/></svg>
<svg style="left:1465px;top:201px" width="15" height="16" viewBox="0 0 15 16"><rect x="0.6" y="0.6" width="11" height="14.8" fill="none" stroke="#2e9a3a" stroke-width="1.2"/><rect x="2.5" y="2.5" width="7" height="2.5" fill="none" stroke="#2e9a3a" stroke-width="1"/><g fill="#2e9a3a"><rect x="2.5" y="6.5" width="1.6" height="1.6"/><rect x="5.2" y="6.5" width="1.6" height="1.6"/><rect x="2.5" y="9.5" width="1.6" height="1.6"/><rect x="2.5" y="12.3" width="1.6" height="1.6"/></g><g fill="#a642c8"><circle cx="10.8" cy="11.8" r="2.5"/><path d="M10.8 8 V15.6 M7 11.8 H14.6 M8.1 9.1 L13.5 14.5 M13.5 9.1 L8.1 14.5" stroke="#a642c8" stroke-width="1.3"/></g><circle cx="10.8" cy="11.8" r="0.9" fill="#f8f8f8"/></svg>
<svg style="left:1488px;top:201px" width="16" height="16" viewBox="0 0 16 16"><path d="M6.6 0.8 H9.4 L9.9 2.9 L11.6 3.6 L13.4 2.5 L15.4 4.5 L14.3 6.3 L15 8 L17 8.5" fill="none"/><g fill="none" stroke="#a642c8" stroke-width="1.1"><path d="M6.8 0.6 L9.2 0.6 L9.7 2.6 L11.5 3.4 L13.3 2.3 L15 4 L13.9 5.8 L14.7 7.6 L15.4 8 L15.4 8 L14.7 8.4 L13.9 10.2 L15 12 L13.3 13.7 L11.5 12.6 L9.7 13.4 L9.2 15.4 L6.8 15.4 L6.3 13.4 L4.5 12.6 L2.7 13.7 L1 12 L2.1 10.2 L1.3 8.4 L0.6 8 L1.3 7.6 L2.1 5.8 L1 4 L2.7 2.3 L4.5 3.4 L6.3 2.6 Z"/><circle cx="8" cy="8" r="2"/></g></svg>
<div class="a" style="left:1243px;top:222px;width:334px;height:22px;background:#fff;border:1px solid #cfcfcf;border-radius:4px"></div>
<svg style="left:1245px;top:226px" width="17" height="14" viewBox="0 0 17 14"><path d="M0.5 1.5 C0.5 0.8 1 0.5 1.5 0.5 H6 L7.5 2 H15 C15.6 2 16 2.4 16 3 V12.5 C16 13.2 15.6 13.5 15 13.5 H1.5 C1 13.5 0.5 13.2 0.5 12.5Z" fill="#f7c948"/><path d="M0.5 4.5 H16 V12.5 C16 13.2 15.6 13.5 15 13.5 H1.5 C1 13.5 0.5 13.2 0.5 12.5Z" fill="#fde58f"/><path d="M0.5 4.5 H16" stroke="#f3b61c" stroke-width="0.8"/></svg>
<div class="t " style="left:1265.5px;top:226px;font-size:13px;color:#333">&laquo;</div>
<div class="t " style="left:1283px;top:226px">Weisang</div>
<div class="t " style="left:1351.3px;top:226px">FlexPro</div>
<div class="t " style="left:1410.7px;top:226px">2025</div>
<div class="t " style="left:1458.3px;top:226px">Examples</div>
<svg style="left:1338px;top:229px" width="5" height="8" viewBox="0 0 5 8"><path d="M0 0 L4.5 4 L0 8Z" fill="#333"/></svg>
<svg style="left:1397.5px;top:229px" width="5" height="8" viewBox="0 0 5 8"><path d="M0 0 L4.5 4 L0 8Z" fill="#333"/></svg>
<svg style="left:1444.5px;top:229px" width="5" height="8" viewBox="0 0 5 8"><path d="M0 0 L4.5 4 L0 8Z" fill="#333"/></svg>
<svg style="left:1514.5px;top:229px" width="5" height="8" viewBox="0 0 5 8"><path d="M0 0 L4.5 4 L0 8Z" fill="#333"/></svg>
<div class="a" style="left:1242px;top:245px;width:333px;height:24px;background:#f7f7f7;border:1px solid #cdcdcd;border-right:none"></div>
<div class="vl" style="left:1341px;top:246px;height:22px;background:#d2d2d2"></div>
<div class="vl" style="left:1342px;top:246px;height:22px;background:#fff"></div>
<div class="vl" style="left:1432px;top:246px;height:22px;background:#d2d2d2"></div>
<div class="vl" style="left:1433px;top:246px;height:22px;background:#fff"></div>
<div class="vl" style="left:1532px;top:246px;height:22px;background:#d2d2d2"></div>
<div class="vl" style="left:1533px;top:246px;height:22px;background:#fff"></div>
<div class="t " style="left:1246.3px;top:250px">Name</div>
<div class="t " style="left:1346.3px;top:250px">Size</div>
<div class="t " style="left:1437px;top:250px">Type</div>
<div class="a" style="left:1535px;top:247px;width:40px;height:20px;overflow:hidden"><div class="t" style="left:2.5px;top:3px">Date modified</div></div>
<svg style="left:1326px;top:255px" width="9" height="5" viewBox="0 0 9 5"><path d="M0 5 H9 L4.5 0Z" fill="#777"/></svg>
<div class="a" style="left:1242px;top:269px;width:333px;height:236px;background:#fcfcfc;overflow:hidden">
<svg style="left:4px;top:2px" width="17" height="14" viewBox="0 0 17 14"><path d="M0.5 1.5 C0.5 0.8 1 0.5 1.5 0.5 H6 L7.5 2 H15 C15.6 2 16 2.4 16 3 V12.5 C16 13.2 15.6 13.5 15 13.5 H1.5 C1 13.5 0.5 13.2 0.5 12.5Z" fill="#f7c948"/><path d="M0.5 4.5 H16 V12.5 C16 13.2 15.6 13.5 15 13.5 H1.5 C1 13.5 0.5 13.2 0.5 12.5Z" fill="#fde58f"/><path d="M0.5 4.5 H16" stroke="#f3b61c" stroke-width="0.8"/></svg>
<div class="t" style="left:22.3px;top:2.5px">Add-In</div>
<svg style="left:4px;top:21px" width="17" height="14" viewBox="0 0 17 14"><path d="M0.5 1.5 C0.5 0.8 1 0.5 1.5 0.5 H6 L7.5 2 H15 C15.6 2 16 2.4 16 3 V12.5 C16 13.2 15.6 13.5 15 13.5 H1.5 C1 13.5 0.5 13.2 0.5 12.5Z" fill="#f7c948"/><path d="M0.5 4.5 H16 V12.5 C16 13.2 15.6 13.5 15 13.5 H1.5 C1 13.5 0.5 13.2 0.5 12.5Z" fill="#fde58f"/><path d="M0.5 4.5 H16" stroke="#f3b61c" stroke-width="0.8"/></svg>
<div class="t" style="left:22.3px;top:21.5px">Data</div>
<svg style="left:4px;top:40px" width="17" height="14" viewBox="0 0 17 14"><path d="M0.5 1.5 C0.5 0.8 1 0.5 1.5 0.5 H6 L7.5 2 H15 C15.6 2 16 2.4 16 3 V12.5 C16 13.2 15.6 13.5 15 13.5 H1.5 C1 13.5 0.5 13.2 0.5 12.5Z" fill="#f7c948"/><path d="M0.5 4.5 H16 V12.5 C16 13.2 15.6 13.5 15 13.5 H1.5 C1 13.5 0.5 13.2 0.5 12.5Z" fill="#fde58f"/><path d="M0.5 4.5 H16" stroke="#f3b61c" stroke-width="0.8"/></svg>
<div class="t" style="left:22.3px;top:40.5px">FPAccess</div>
<svg style="left:4px;top:59px" width="17" height="14" viewBox="0 0 17 14"><path d="M0.5 1.5 C0.5 0.8 1 0.5 1.5 0.5 H6 L7.5 2 H15 C15.6 2 16 2.4 16 3 V12.5 C16 13.2 15.6 13.5 15 13.5 H1.5 C1 13.5 0.5 13.2 0.5 12.5Z" fill="#f7c948"/><path d="M0.5 4.5 H16 V12.5 C16 13.2 15.6 13.5 15 13.5 H1.5 C1 13.5 0.5 13.2 0.5 12.5Z" fill="#fde58f"/><path d="M0.5 4.5 H16" stroke="#f3b61c" stroke-width="0.8"/></svg>
<div class="t" style="left:22.3px;top:59.5px">Tutorials</div>
<svg style="left:4px;top:78px" width="17" height="14" viewBox="0 0 17 14"><path d="M0.5 1.5 C0.5 0.8 1 0.5 1.5 0.5 H6 L7.5 2 H15 C15.6 2 16 2.4 16 3 V12.5 C16 13.2 15.6 13.5 15 13.5 H1.5 C1 13.5 0.5 13.2 0.5 12.5Z" fill="#f7c948"/><path d="M0.5 4.5 H16 V12.5 C16 13.2 15.6 13.5 15 13.5 H1.5 C1 13.5 0.5 13.2 0.5 12.5Z" fill="#fde58f"/><path d="M0.5 4.5 H16" stroke="#f3b61c" stroke-width="0.8"/></svg>
<div class="t" style="left:22.3px;top:78.5px">VBA</div>
<svg style="left:4px;top:96px" width="17" height="16" viewBox="0 0 17 16"><g fill="#f4bd3a"><rect x="5.7" y="1.3" width="9.6" height="13" rx="3.5"/></g><path d="M6 4.5 C8 5.6 13 5.6 15.3 4.5 M6 7.8 C8 8.9 13 8.9 15.3 7.8 M6 11.1 C8 12.2 13 12.2 15.3 11.1" fill="none" stroke="#fcfcfc" stroke-width="0.9"/><path d="M5.6 3.4 C7.3 5 7.4 8 7.1 9.8 L10 11.7 L6.8 11.9 L5.5 14.2 L4.2 11.9 L1 12.1 L4.1 9.8 C3.8 8 3.9 5 5.6 3.4 Z" fill="#2a2a2a" stroke="#fcfcfc" stroke-width="0.5"/></svg>
<div class="t" style="left:22.3px;top:97.5px">Analysis.fpd</div>
<svg style="left:4px;top:115px" width="17" height="16" viewBox="0 0 17 16"><g fill="#f4bd3a"><rect x="5.7" y="1.3" width="9.6" height="13" rx="3.5"/></g><path d="M6 4.5 C8 5.6 13 5.6 15.3 4.5 M6 7.8 C8 8.9 13 8.9 15.3 7.8 M6 11.1 C8 12.2 13 12.2 15.3 11.1" fill="none" stroke="#fcfcfc" stroke-width="0.9"/><path d="M5.6 3.4 C7.3 5 7.4 8 7.1 9.8 L10 11.7 L6.8 11.9 L5.5 14.2 L4.2 11.9 L1 12.1 L4.1 9.8 C3.8 8 3.9 5 5.6 3.4 Z" fill="#2a2a2a" stroke="#fcfcfc" stroke-width="0.5"/></svg>
<div class="t" style="left:22.3px;top:116.5px">Control Pan...</div>
<svg style="left:4px;top:134px" width="17" height="16" viewBox="0 0 17 16"><g fill="#f4bd3a"><rect x="5.7" y="1.3" width="9.6" height="13" rx="3.5"/></g><path d="M6 4.5 C8 5.6 13 5.6 15.3 4.5 M6 7.8 C8 8.9 13 8.9 15.3 7.8 M6 11.1 C8 12.2 13 12.2 15.3 11.1" fill="none" stroke="#fcfcfc" stroke-width="0.9"/><path d="M5.6 3.4 C7.3 5 7.4 8 7.1 9.8 L10 11.7 L6.8 11.9 L5.5 14.2 L4.2 11.9 L1 12.1 L4.1 9.8 C3.8 8 3.9 5 5.6 3.4 Z" fill="#2a2a2a" stroke="#fcfcfc" stroke-width="0.5"/></svg>
<div class="t" style="left:22.3px;top:135.5px">Data Query ...</div>
<svg style="left:4px;top:153px" width="17" height="16" viewBox="0 0 17 16"><g fill="#f4bd3a"><rect x="5.7" y="1.3" width="9.6" height="13" rx="3.5"/></g><path d="M6 4.5 C8 5.6 13 5.6 15.3 4.5 M6 7.8 C8 8.9 13 8.9 15.3 7.8 M6 11.1 C8 12.2 13 12.2 15.3 11.1" fill="none" stroke="#fcfcfc" stroke-width="0.9"/><path d="M5.6 3.4 C7.3 5 7.4 8 7.1 9.8 L10 11.7 L6.8 11.9 L5.5 14.2 L4.2 11.9 L1 12.1 L4.1 9.8 C3.8 8 3.9 5 5.6 3.4 Z" fill="#2a2a2a" stroke="#fcfcfc" stroke-width="0.5"/></svg>
<div class="t" style="left:22.3px;top:154.5px">Document C...</div>
<svg style="left:4px;top:172px" width="17" height="16" viewBox="0 0 17 16"><g fill="#f4bd3a"><rect x="5.7" y="1.3" width="9.6" height="13" rx="3.5"/></g><path d="M6 4.5 C8 5.6 13 5.6 15.3 4.5 M6 7.8 C8 8.9 13 8.9 15.3 7.8 M6 11.1 C8 12.2 13 12.2 15.3 11.1" fill="none" stroke="#fcfcfc" stroke-width="0.9"/><path d="M5.6 3.4 C7.3 5 7.4 8 7.1 9.8 L10 11.7 L6.8 11.9 L5.5 14.2 L4.2 11.9 L1 12.1 L4.1 9.8 C3.8 8 3.9 5 5.6 3.4 Z" fill="#2a2a2a" stroke="#fcfcfc" stroke-width="0.5"/></svg>
<div class="t" style="left:22.3px;top:173.5px">FPScript.fpd</div>
<svg style="left:4px;top:191px" width="17" height="16" viewBox="0 0 17 16"><g fill="#f4bd3a"><rect x="5.7" y="1.3" width="9.6" height="13" rx="3.5"/></g><path d="M6 4.5 C8 5.6 13 5.6 15.3 4.5 M6 7.8 C8 8.9 13 8.9 15.3 7.8 M6 11.1 C8 12.2 13 12.2 15.3 11.1" fill="none" stroke="#fcfcfc" stroke-width="0.9"/><path d="M5.6 3.4 C7.3 5 7.4 8 7.1 9.8 L10 11.7 L6.8 11.9 L5.5 14.2 L4.2 11.9 L1 12.1 L4.1 9.8 C3.8 8 3.9 5 5.6 3.4 Z" fill="#2a2a2a" stroke="#fcfcfc" stroke-width="0.5"/></svg>
<div class="t" style="left:22.3px;top:192.5px">Order Tracki...</div>
<svg style="left:4px;top:210px" width="17" height="16" viewBox="0 0 17 16"><g fill="#f4bd3a"><rect x="5.7" y="1.3" width="9.6" height="13" rx="3.5"/></g><path d="M6 4.5 C8 5.6 13 5.6 15.3 4.5 M6 7.8 C8 8.9 13 8.9 15.3 7.8 M6 11.1 C8 12.2 13 12.2 15.3 11.1" fill="none" stroke="#fcfcfc" stroke-width="0.9"/><path d="M5.6 3.4 C7.3 5 7.4 8 7.1 9.8 L10 11.7 L6.8 11.9 L5.5 14.2 L4.2 11.9 L1 12.1 L4.1 9.8 C3.8 8 3.9 5 5.6 3.4 Z" fill="#2a2a2a" stroke="#fcfcfc" stroke-width="0.5"/></svg>
<div class="t" style="left:22.3px;top:211.5px">Presentation...</div>
<svg style="left:4px;top:229px" width="17" height="16" viewBox="0 0 17 16"><g fill="#f4bd3a"><rect x="5.7" y="1.3" width="9.6" height="13" rx="3.5"/></g><path d="M6 4.5 C8 5.6 13 5.6 15.3 4.5 M6 7.8 C8 8.9 13 8.9 15.3 7.8 M6 11.1 C8 12.2 13 12.2 15.3 11.1" fill="none" stroke="#fcfcfc" stroke-width="0.9"/><path d="M5.6 3.4 C7.3 5 7.4 8 7.1 9.8 L10 11.7 L6.8 11.9 L5.5 14.2 L4.2 11.9 L1 12.1 L4.1 9.8 C3.8 8 3.9 5 5.6 3.4 Z" fill="#2a2a2a" stroke="#fcfcfc" stroke-width="0.5"/></svg>
<div class="t" style="left:22.3px;top:230.5px">Recycl...</div>
</div>
<div class="a" style="left:1575px;top:245px;width:17px;height:260px;background:#f0f0f0"></div>
<svg style="left:1579px;top:250px" width="9" height="6" viewBox="0 0 9 6"><path d="M0 6 H9 L4.5 0.5Z" fill="#777"/></svg>
<div class="a" style="left:1579px;top:262px;width:9px;height:194px;background:#cbcbcb;border-radius:5px"></div>
<svg style="left:1579px;top:495px" width="9" height="5" viewBox="0 0 9 5"><path d="M0 0 H9 L4.5 5Z" fill="#777"/></svg>
<div class="a" style="left:1242px;top:505px;width:333px;height:17px;background:#f0f0f0"></div>
<div class="a" style="left:1575px;top:505px;width:17px;height:17px;background:#f7f7f7"></div>
<svg style="left:1248px;top:509px" width="6" height="9" viewBox="0 0 6 9"><path d="M6 0 V9 L0.5 4.5Z" fill="#777"/></svg>
<div class="a" style="left:1259px;top:509px;width:255px;height:9px;background:#cbcbcb;border-radius:5px"></div>
<svg style="left:1564px;top:509px" width="6" height="9" viewBox="0 0 6 9"><path d="M0 0 V9 L5.5 4.5Z" fill="#777"/></svg>
<div class="hl" style="left:1242px;top:522px;width:350px;background:#c8c8c8"></div>
<!-- PROPERTIES -->
<div class="t " style="left:1246.5px;top:532px;color:#333">Properties</div>
<svg style="left:1539px;top:539px" width="9" height="5" viewBox="0 0 9 5"><path d="M0 0 H9 L4.5 5Z" fill="#6e6e6e"/></svg>
<svg style="left:1559px;top:536px" width="8" height="10" viewBox="0 0 8 10"><path d="M2 0.5 H6 V6 H2Z M0 6.5 H8 M4 6.5 V10" fill="none" stroke="#6e6e6e" stroke-width="1.2"/></svg>
<svg style="left:1577px;top:536px" width="9" height="9" viewBox="0 0 9 9"><path d="M0.7 0.7 L8.3 8.3 M8.3 0.7 L0.7 8.3" stroke="#6e6e6e" stroke-width="1.3"/></svg>
<div class="a" style="left:1242px;top:551px;width:350px;height:29px;background:#f8f8f8"></div>
<svg style="left:1250px;top:557px" width="16" height="17" viewBox="0 0 16 17"><text x="0" y="8" font-family="Liberation Sans" font-size="9.5" fill="#1e88d6">A</text><text x="0.3" y="16.3" font-family="Liberation Sans" font-size="9.5" fill="#a642c8">Z</text><path d="M11.2 2 V15.5 M7.8 12 L11.2 15.7 L14.6 12" fill="none" stroke="#222" stroke-width="1.3"/></svg>
<svg style="left:1273px;top:556px" width="17" height="18" viewBox="0 0 17 18"><g fill="#fff" stroke="#222" stroke-width="1"><rect x="0.5" y="1" width="5" height="3.3"/><rect x="0.5" y="13.5" width="5" height="3.3"/><rect x="10.5" y="7.3" width="5.5" height="3.3"/></g><path d="M6 3 L9.5 7.3 M6 15 L9.5 10.6" stroke="#1e88d6" stroke-width="1"/><path d="M10 8 L9.8 5.5 L7.8 6.8Z M10 10 L9.8 12.5 L7.8 11.2Z" fill="#1e88d6"/></svg>
<div class="a" style="left:1292px;top:554px;width:22px;height:22px;background:#dedede;border:1px solid #b9b9b9;border-radius:4px"></div>
<svg style="left:1296px;top:559px" width="14" height="12" viewBox="0 0 14 12"><path d="M5 2.5 H0.5 V9.5 H4" fill="none" stroke="#222" stroke-width="1"/><rect x="6.5" y="3" width="6.5" height="6" fill="#444"/><path d="M3 11.5 L10 0.5" stroke="#1e88d6" stroke-width="1.1"/></svg>
<div class="a" style="left:1321px;top:554px;width:267px;height:22px;background:#fff;border:1px solid #c6c6c6"></div>
<div class="t " style="left:1329px;top:558px;color:#6d6d6d">Search</div>
<svg style="left:1569px;top:558px" width="15" height="15" viewBox="0 0 15 15"><circle cx="9.5" cy="5.5" r="4.5" fill="none" stroke="#5a4780" stroke-width="1.3"/><path d="M6.3 8.7 L1 14" stroke="#5a4780" stroke-width="1.8"/></svg>
<div class="a" style="left:1242px;top:580px;width:333px;height:114px;background:#f7f7f7"></div>
<svg style="left:1249px;top:587px" width="6" height="6" viewBox="0 0 6 6"><path d="M6 0 V6 H0Z" fill="#a3a3a3"/></svg>
<div class="t " style="left:1265.5px;top:583px;font-weight:bold;color:#222;letter-spacing:-0.2px">Data query</div>
<div class="a" style="left:1261px;top:600px;width:314px;height:18px;background:#fcfcfc"></div>
<div class="a" style="left:1417px;top:600px;width:1px;height:18px;background:#f0f0f0"></div>
<div class="t " style="left:1265.5px;top:602px">Name</div>
<div class="t " style="left:1422.4px;top:602px">Data</div>
<div class="a" style="left:1261px;top:619px;width:314px;height:18px;background:#fcfcfc"></div>
<div class="a" style="left:1417px;top:619px;width:1px;height:18px;background:#f0f0f0"></div>
<div class="t " style="left:1265.5px;top:621px">Category</div>
<div class="a" style="left:1261px;top:638px;width:314px;height:18px;background:#fcfcfc"></div>
<div class="a" style="left:1417px;top:638px;width:1px;height:18px;background:#f0f0f0"></div>
<div class="t " style="left:1265.5px;top:640px">Open</div>
<div class="t " style="left:1422.4px;top:640px">False</div>
<div class="a" style="left:1261px;top:657px;width:314px;height:18px;background:#fcfcfc"></div>
<div class="a" style="left:1417px;top:657px;width:1px;height:18px;background:#f0f0f0"></div>
<div class="t " style="left:1265.5px;top:659px">Write-protected</div>
<div class="t " style="left:1422.4px;top:659px">False</div>
<div class="a" style="left:1261px;top:676px;width:314px;height:19px;background:#fcfcfc"></div>
<div class="a" style="left:1417px;top:676px;width:1px;height:18px;background:#f0f0f0"></div>
<div class="t " style="left:1265.5px;top:678px">Creation date</div>
<div class="t " style="left:1422.4px;top:678px">21/11/2024 16:49:58</div>
<div class="a" style="left:1575px;top:580px;width:17px;height:114px;background:#f0f0f0"></div>
<svg style="left:1579px;top:587px" width="9" height="6" viewBox="0 0 9 6"><path d="M0 6 H9 L4.5 0.5Z" fill="#777"/></svg>
<div class="a" style="left:1579px;top:598px;width:9px;height:17px;background:#cbcbcb;border-radius:5px"></div>
<svg style="left:1579px;top:684px" width="9" height="5" viewBox="0 0 9 5"><path d="M0 0 H9 L4.5 5Z" fill="#777"/></svg>
<div class="hl" style="left:1242px;top:717px;width:350px;background:#c8c8c8"></div>
<div class="a" style="left:1242px;top:694px;width:80px;height:23px;background:#fcfcfc;border:1px solid #c8c8c8;border-top:none"></div>
<svg style="left:1247px;top:696px" width="13" height="15" viewBox="0 0 13 15"><path d="M2.5 0.5 V5 M1 5 H4 V14.5 H1Z" fill="#1e88d6" stroke="#1e88d6" stroke-width="1"/><circle cx="2.5" cy="1.5" r="1.2" fill="none" stroke="#1e88d6" stroke-width="1"/><path d="M9.5 5 V14.5" stroke="#1e88d6" stroke-width="2.4"/><path d="M7.2 0.5 V3 C7.2 4.5 11.8 4.5 11.8 3 V0.5" fill="none" stroke="#1e88d6" stroke-width="1.3"/></svg>
<div class="t " style="left:1264.5px;top:697px">Properties</div>
<svg style="left:1327px;top:696px" width="14" height="14" viewBox="0 0 14 14"><g fill="none" stroke="#444" stroke-width="1"><rect x="0.5" y="0.5" width="5" height="2.5"/><path d="M2.5 3 V12 H6 M2.5 7.5 H6"/><rect x="6" y="4" width="7" height="3" fill="#bbb"/><rect x="6" y="7.5" width="7" height="2.5" fill="#bbb"/><rect x="6" y="10.5" width="7" height="3" fill="#bbb"/></g></svg>
<div class="t " style="left:1345.4px;top:698px">Object Hierarchy</div>
<svg style="left:1442px;top:697px" width="14" height="14" viewBox="0 0 14 14"><polyline points="0,6 2,6 3,3 4,9 5,1 6,10 7,2.5 8,8 9,5 10,6" fill="none" stroke="#e63b3b" stroke-width="1.1"/><circle cx="9.5" cy="9" r="2.3" fill="#fff" stroke="#222" stroke-width="1.1"/><path d="M11 10.8 L13.5 13.5" stroke="#222" stroke-width="1.5"/></svg>
<div class="t " style="left:1459.4px;top:698px">Data Preview</div>
<!-- PREVIEW -->
<div class="t " style="left:1246.5px;top:727px;color:#333">Preview</div>
<svg style="left:1539px;top:733px" width="9" height="5" viewBox="0 0 9 5"><path d="M0 0 H9 L4.5 5Z" fill="#6e6e6e"/></svg>
<svg style="left:1559px;top:730px" width="8" height="10" viewBox="0 0 8 10"><path d="M2 0.5 H6 V6 H2Z M0 6.5 H8 M4 6.5 V10" fill="none" stroke="#6e6e6e" stroke-width="1.2"/></svg>
<svg style="left:1577px;top:730px" width="9" height="9" viewBox="0 0 9 9"><path d="M0.7 0.7 L8.3 8.3 M8.3 0.7 L0.7 8.3" stroke="#6e6e6e" stroke-width="1.3"/></svg>
<div class="a" style="left:1242px;top:746px;width:350px;height:207px;background:#fcfcfc"></div>
<div class="hl" style="left:1242px;top:953px;width:350px;background:#c8c8c8"></div>
<div class="a" style="left:1242px;top:953px;width:67px;height:22px;background:#fcfcfc;border:1px solid #c8c8c8;border-top:none"></div>
<div class="hl" style="left:1242px;top:975px;width:350px;background:#c8c8c8"></div>
<svg style="left:1247px;top:957px" width="12" height="11" viewBox="0 0 12 11"><rect x="0.5" y="0.5" width="11" height="10" fill="#fff" stroke="#444" stroke-width="1"/><path d="M0.5 2 H11.5" stroke="#444" stroke-width="1"/><polyline points="1,6.5 4,6.5 5,4.5 6,9 7,5.5 8,6.5 11,6.5" fill="none" stroke="#e63b3b" stroke-width="1.1"/></svg>
<div class="t " style="left:1264.4px;top:956px">Preview</div>
<svg style="left:1316px;top:957px" width="11" height="12" viewBox="0 0 11 12"><path d="M3.3 8 C3.3 6 0.8 5.5 0.8 3.5 A4.7 3.2 0 0 1 10.2 3.5 C10.2 5.5 7.7 6 7.7 8 Z" fill="none" stroke="#e0620f" stroke-width="1.1"/><path d="M3.5 9.7 H7.5 M4.3 11.3 H6.7" stroke="#e0620f" stroke-width="1"/></svg>
<div class="t " style="left:1332.7px;top:957px">Dynamic Help</div>
<svg style="left:1414px;top:957px" width="12" height="11" viewBox="0 0 12 11"><rect x="0.5" y="0.5" width="11" height="10" fill="#fff" stroke="#444" stroke-width="1"/><path d="M0.5 2.3 H11.5 M4.3 2.3 V10.5" stroke="#444" stroke-width="1"/><path d="M1.5 4 V9.5" stroke="#1e88d6" stroke-width="1.6"/></svg>
<div class="t " style="left:1431.6px;top:957px">Coordinates</div>
<svg style="left:1321px;top:777px" width="191" height="144" viewBox="0 0 191 144">
<rect x="0.5" y="0.5" width="190" height="143" fill="#fcfcfc" stroke="#555" stroke-width="1"/>
<polygon points="48.7,56.3 69.2,22.7 69.2,88.0 49.2,114.0" fill="#efefef"/>
<polygon points="69.2,22.7 183.6,28.5 183.6,89.4 69.2,88.0" fill="#f3f3f3"/>
<polygon points="49.2,114.0 63.4,90.4 183.1,89.4 164.7,121.4" fill="#e5e5e5"/>
<polygon points="69.2,53.7 78.6,54.7 96.5,52.6 111.2,46.3 123.8,39.0 128.0,35.3 132.2,35.3 138.0,39.5 139.0,45.0 120.0,50.0 100.0,57.0 89.0,58.0 70.2,55.5" fill="#5b9bd5"/>
<polygon points="66.0,58.4 78.6,59.5 107.0,53.7 122.8,49.5 135.0,44.0 141.6,38.0 149.0,40.6 159.5,52.6 170.0,62.1 178.9,66.3 178.9,65.0 178.9,69.2 178.0,69.2 178.0,65.0 177.3,66.1 177.3,70.8 176.4,70.8 176.4,66.1 175.7,67.2 175.7,72.2 174.8,72.2 174.8,67.2 174.1,68.2 174.1,74.0 173.2,74.0 173.2,68.2 172.5,69.3 172.5,74.1 171.6,74.1 171.6,69.3 170.9,70.4 170.9,76.0 170.0,76.0 170.0,70.4 169.3,71.5 169.3,72.8 168.4,72.8 168.4,71.5 167.6,72.5 167.6,76.0 166.7,76.0 166.7,72.5 166.0,73.6 166.0,79.3 165.1,79.3 165.1,73.6 164.4,74.7 164.4,79.0 163.5,79.0 163.5,74.7 162.8,75.8 162.8,81.3 161.9,81.3 161.9,75.8 161.2,76.8 161.2,78.6 160.3,78.6 160.3,76.8 159.6,77.9 159.6,81.4 158.7,81.4 158.7,77.9 158.0,82.0 130.0,62.0 110.0,60.0 90.0,62.0 78.6,62.0 66.0,60.5" fill="#ed7d31"/>
<polygon points="62.4,64.2 78.6,64.7 96.5,62.1 117.5,52.6 125.9,49.5 135.3,41.1 141.6,39.0 154.2,52.6 175.3,70.5 177.9,73.1 177.9,70.0 177.9,73.2 177.0,73.2 177.0,70.0 176.3,71.4 176.3,76.4 175.4,76.4 175.4,71.4 174.6,72.7 174.6,78.0 173.7,78.0 173.7,72.7 173.0,74.1 173.0,75.7 172.1,75.7 172.1,74.1 171.3,75.4 171.3,78.4 170.4,78.4 170.4,75.4 169.7,76.8 169.7,80.2 168.8,80.2 168.8,76.8 168.1,78.1 168.1,85.6 167.2,85.6 167.2,78.1 166.4,79.5 166.4,86.0 165.5,86.0 165.5,79.5 164.8,80.8 164.8,83.4 163.9,83.4 163.9,80.8 163.1,82.2 163.1,88.9 162.2,88.9 162.2,82.2 161.5,83.5 161.5,86.0 160.6,86.0 160.6,83.5 159.8,84.9 159.8,90.4 158.9,90.4 158.9,84.9 158.2,86.2 158.2,88.6 157.3,88.6 157.3,86.2 156.6,87.6 156.6,89.2 155.7,89.2 155.7,87.6 154.9,88.9 154.9,96.1 154.0,96.1 154.0,88.9 153.3,90.3 153.3,93.2 152.4,93.2 152.4,90.3 151.6,91.6 151.6,94.6 150.7,94.6 150.7,91.6 150.0,97.0 135.0,78.0 118.0,68.0 98.0,70.0 78.6,67.5 62.4,66.8" fill="#a5a5a5"/>
<polygon points="59.2,71.0 78.6,71.5 98.6,67.3 117.5,55.8 130.1,46.3 135.3,49.5 149.0,64.2 160.5,77.8 160.5,75.0 160.5,82.9 159.6,82.9 159.6,75.0 158.9,76.2 158.9,83.4 158.0,83.4 158.0,76.2 157.2,77.4 157.2,80.9 156.3,80.9 156.3,77.4 155.6,78.6 155.6,86.4 154.7,86.4 154.7,78.6 154.0,79.8 154.0,84.9 153.1,84.9 153.1,79.8 152.4,81.0 152.4,86.9 151.5,86.9 151.5,81.0 150.8,82.2 150.8,85.1 149.8,85.1 149.8,82.2 149.1,83.4 149.1,91.0 148.2,91.0 148.2,83.4 147.5,84.6 147.5,90.6 146.6,90.6 146.6,84.6 145.9,85.8 145.9,93.6 145.0,93.6 145.0,85.8 144.2,87.0 144.2,94.3 143.3,94.3 143.3,87.0 142.6,88.2 142.6,91.7 141.7,91.7 141.7,88.2 141.0,89.4 141.0,93.3 140.1,93.3 140.1,89.4 139.4,90.6 139.4,93.3 138.5,93.3 138.5,90.6 137.8,91.8 137.8,94.3 136.8,94.3 136.8,91.8 136.1,93.0 136.1,95.0 135.2,95.0 135.2,93.0 134.5,94.2 134.5,97.7 133.6,97.7 133.6,94.2 132.9,95.4 132.9,100.9 132.0,100.9 132.0,95.4 131.2,96.6 131.2,98.2 130.3,98.2 130.3,96.6 129.6,97.8 129.6,103.7 128.7,103.7 128.7,97.8 128.0,103.0 118.0,88.0 100.0,80.0 80.0,75.0 59.2,73.5" fill="#ffc000"/>
<polygon points="55.0,75.8 75.0,76.5 94.4,78.4 94.4,80.6 75.0,79.0 55.0,77.8" fill="#4bacc6"/>
<polygon points="51.9,82.0 81.8,82.6 98.6,76.8 109.1,72.6 116.4,62.1 123.8,68.4 138.5,81.0 145.8,87.3 145.8,85.5 145.8,88.3 144.9,88.3 144.9,85.5 144.2,86.6 144.2,89.3 143.3,89.3 143.3,86.6 142.5,87.8 142.5,92.9 141.6,92.9 141.6,87.8 140.9,88.9 140.9,92.4 140.0,92.4 140.0,88.9 139.3,90.1 139.3,92.8 138.4,92.8 138.4,90.1 137.6,91.2 137.6,94.7 136.7,94.7 136.7,91.2 136.0,92.4 136.0,97.0 135.1,97.0 135.1,92.4 134.4,93.5 134.4,95.0 133.5,95.0 133.5,93.5 132.7,94.7 132.7,100.6 131.8,100.6 131.8,94.7 131.1,95.8 131.1,97.1 130.2,97.1 130.2,95.8 129.4,97.0 129.4,101.8 128.5,101.8 128.5,97.0 127.8,98.1 127.8,103.4 126.9,103.4 126.9,98.1 126.2,99.3 126.2,100.6 125.3,100.6 125.3,99.3 124.5,100.4 124.5,105.4 123.6,105.4 123.6,100.4 122.9,101.6 122.9,104.5 122.0,104.5 122.0,101.6 121.3,102.7 121.3,106.7 120.4,106.7 120.4,102.7 119.6,103.9 119.6,105.1 118.7,105.1 118.7,103.9 118.0,108.0 116.4,110.4 109.1,102.0 102.8,96.7 90.0,90.0 81.8,85.0 51.9,84.3" fill="#70ad47"/>
<polygon points="49.3,87.8 61.8,86.3 75.5,87.8 83.9,81.0 89.1,78.4 98.6,80.0 107.0,87.3 110.1,90.4 122.8,93.2 122.8,94.6 110.0,93.0 107.0,95.7 104.0,94.0 101.0,98.5 98.6,97.8 95.0,101.0 92.0,99.0 88.1,102.0 85.0,100.0 81.8,98.8 75.5,91.5 61.8,88.6 49.3,89.5" fill="#255e91"/>
<g font-family="Liberation Sans" font-size="10" fill="#44546a">
<text x="66.3" y="16" text-anchor="middle">0</text>
<text x="45.4" y="50" text-anchor="middle">6</text>
<text x="43" y="61.5" text-anchor="end">7,22891</text>
<text x="40.7" y="91" text-anchor="middle">G</text>
<text x="43" y="121.3" text-anchor="end">-6,5864</text>
<text x="48.5" y="133" text-anchor="middle">0</text>
<text x="105.9" y="137" text-anchor="middle">s</text>
<text x="175.6" y="139" text-anchor="end">2,182</text>
</g></svg>
<!-- FOLDERS PANEL -->
<div class="t " style="left:12.4px;top:668px;color:#333">Folders</div>
<svg style="left:228px;top:674.5px" width="9" height="5" viewBox="0 0 9 5"><path d="M0 0 H9 L4.5 5Z" fill="#6e6e6e"/></svg>
<svg style="left:248px;top:671.5px" width="8" height="10" viewBox="0 0 8 10"><path d="M2 0.5 H6 V6 H2Z M0 6.5 H8 M4 6.5 V10" fill="none" stroke="#6e6e6e" stroke-width="1.2"/></svg>
<svg style="left:266px;top:671.5px" width="9" height="9" viewBox="0 0 9 9"><path d="M0.7 0.7 L8.3 8.3 M8.3 0.7 L0.7 8.3" stroke="#6e6e6e" stroke-width="1.3"/></svg>
<div class="a" style="left:8px;top:687px;width:273px;height:24px;background:#f8f8f8"></div>
<div class="a" style="left:18px;top:689px;width:178px;height:20px;background:#fff;border:1px solid #c9c9c9;border-radius:4px"></div>
<div class="t " style="left:22px;top:692px">(No activated subfolder)</div>
<svg style="left:186px;top:698px" width="6" height="4" viewBox="0 0 6 4"><path d="M0 0 H6 L3 3.5Z" fill="#555"/></svg>
<svg style="left:209px;top:694px" width="15" height="14" viewBox="0 0 15 14"><path d="M0.5 10.5 V0.7 H5.2 L6.6 2.4 H12.5 V10.5 Z" fill="#e8e8e8" stroke="#bdbdbd" stroke-width="1"/><path d="M0.5 3.2 H5.2 L6.6 2.4" fill="none" stroke="#bdbdbd" stroke-width="1"/><path d="M0.5 9.3 H8 M3.7 6 L0.4 9.3 L3.7 12.6" fill="none" stroke="#f8f8f8" stroke-width="2.6"/><path d="M0.5 9.3 H7.8 M3.7 6 L0.4 9.3 L3.7 12.6" fill="none" stroke="#bdbdbd" stroke-width="1"/></svg>
<svg style="left:234px;top:694px" width="15" height="14" viewBox="0 0 15 14"><path d="M0.5 10.5 V0.7 H5.2 L6.6 2.4 H12.5 V10.5 Z" fill="#e8e8e8" stroke="#bdbdbd" stroke-width="1"/><path d="M0.5 3.2 H5.2 L6.6 2.4" fill="none" stroke="#bdbdbd" stroke-width="1"/><path d="M6 9.3 H14 M10.8 6 L14.1 9.3 L10.8 12.6" fill="none" stroke="#f8f8f8" stroke-width="2.6"/><path d="M6.2 9.3 H14 M10.8 6 L14.1 9.3 L10.8 12.6" fill="none" stroke="#bdbdbd" stroke-width="1"/></svg>
<svg style="left:259px;top:694px" width="15" height="14" viewBox="0 0 15 14"><path d="M0.5 10.5 V0.7 H5.2 L6.6 2.4 H12.5 V10.5 Z" fill="#e8e8e8" stroke="#bdbdbd" stroke-width="1"/><path d="M0.5 3.2 H5.2 L6.6 2.4" fill="none" stroke="#bdbdbd" stroke-width="1"/></svg>
<div class="a" style="left:8px;top:711px;width:273px;height:265px;background:#fcfcfc"></div>
<div class="a" style="left:9px;top:711px;width:221px;height:18px;background:#d9d9d9;border-radius:3px"></div>
<svg style="left:13px;top:713px" width="13" height="15" viewBox="0 0 13 15"><g fill="none" stroke="#e0620f" stroke-width="1.1"><ellipse cx="6.5" cy="2.5" rx="5.8" ry="2"/><path d="M0.7 2.5 V12.3 C0.7 13.6 3 14.4 6.5 14.4 C10 14.4 12.3 13.6 12.3 12.3 V2.5"/><path d="M0.7 5.8 C0.7 7 3 7.8 6.5 7.8 C10 7.8 12.3 7 12.3 5.8 M0.7 9.2 C0.7 10.4 3 11.2 6.5 11.2 C10 11.2 12.3 10.4 12.3 9.2"/></g></svg>
<div class="t " style="left:32.2px;top:713px;letter-spacing:-0.23px">Project Database: 'Project Database1'</div>
<svg style="left:30px;top:730px" width="17" height="17" viewBox="0 0 17 17"><g fill="none" stroke="#e0620f" stroke-width="1"><path d="M8.5 0.8 C10 -0.3 15.5 -0.3 16 1.2 C16 2.5 10 2.8 9 2"/><path d="M16 1.2 V8"/><path d="M9.5 4.2 C11 5 15 5 16 4"/></g><g fill="#fff" stroke="#1e88d6" stroke-width="1"><path d="M1.3 4.5 V2.3 C1.3 1.3 3.7 1.3 3.7 2.3 V4.5 M5.8 4.5 V2.3 C5.8 1.3 8.2 1.3 8.2 2.3 V4.5"/><rect x="0.5" y="4.5" width="4" height="3.6"/><rect x="5" y="4.5" width="4" height="3.6"/></g><polyline points="0,11.8 1.8,11.8 2.6,10.5 3.4,13.5 4.2,9.5 5,14.5 5.8,10 6.6,13 7.4,11 8.2,12.3 9.5,11.8" fill="none" stroke="#3a9a3f" stroke-width="1"/><circle cx="12" cy="11" r="4.3" fill="#e63b3b"/><path d="M9.6 11 H14.4" stroke="#fff" stroke-width="1.7"/></svg>
<div class="t " style="left:51.75px;top:731px">Data</div>
<svg style="left:31px;top:751px" width="14" height="12" viewBox="0 0 14 12"><path d="M0.5 0.5 H5 L6.5 2 H13.5 V11.5 H0.5Z" fill="#fdd9b8" stroke="#f5994a" stroke-width="1"/><path d="M0.5 3.5 H13.5" stroke="#f5994a" stroke-width="0.8"/></svg>
<div class="t " style="left:51.75px;top:749px">Measurement 1</div>
<svg style="left:31px;top:769px" width="14" height="12" viewBox="0 0 14 12"><path d="M0.5 0.5 H5 L6.5 2 H13.5 V11.5 H0.5Z" fill="#fdd9b8" stroke="#f5994a" stroke-width="1"/><path d="M0.5 3.5 H13.5" stroke="#f5994a" stroke-width="0.8"/></svg>
<div class="t " style="left:51.75px;top:767px">Measurement 2</div>
<svg style="left:31px;top:787px" width="14" height="12" viewBox="0 0 14 12"><path d="M0.5 0.5 H5 L6.5 2 H13.5 V11.5 H0.5Z" fill="#fdd9b8" stroke="#f5994a" stroke-width="1"/><path d="M0.5 3.5 H13.5" stroke="#f5994a" stroke-width="0.8"/></svg>
<div class="t " style="left:51.75px;top:785px">Measurement 3</div>
<svg style="left:31px;top:805px" width="14" height="12" viewBox="0 0 14 12"><path d="M0.5 0.5 H5 L6.5 2 H13.5 V11.5 H0.5Z" fill="#fdd9b8" stroke="#f5994a" stroke-width="1"/><path d="M0.5 3.5 H13.5" stroke="#f5994a" stroke-width="0.8"/></svg>
<div class="t " style="left:51.75px;top:803px">Measurement 4</div>
<svg style="left:31px;top:823px" width="14" height="12" viewBox="0 0 14 12"><path d="M0.5 0.5 H5 L6.5 2 H13.5 V11.5 H0.5Z" fill="#fdd9b8" stroke="#f5994a" stroke-width="1"/><path d="M0.5 3.5 H13.5" stroke="#f5994a" stroke-width="0.8"/></svg>
<div class="t " style="left:51.75px;top:821px">Measurement 5</div>
<svg style="left:31px;top:841px" width="14" height="12" viewBox="0 0 14 12"><path d="M0.5 0.5 H5 L6.5 2 H13.5 V11.5 H0.5Z" fill="#fdd9b8" stroke="#f5994a" stroke-width="1"/><path d="M0.5 3.5 H13.5" stroke="#f5994a" stroke-width="0.8"/></svg>
<div class="t " style="left:51.75px;top:839px">Measurement 6</div>
<svg style="left:31px;top:859px" width="14" height="12" viewBox="0 0 14 12"><path d="M0.5 0.5 H5 L6.5 2 H13.5 V11.5 H0.5Z" fill="#fdd9b8" stroke="#f5994a" stroke-width="1"/><path d="M0.5 3.5 H13.5" stroke="#f5994a" stroke-width="0.8"/></svg>
<div class="t " style="left:51.75px;top:857px">Measurement 7</div>
<!-- OBJECT LIST -->
<div class="t " style="left:291.3px;top:668px;color:#333">Object List</div>
<svg style="left:1183px;top:674.5px" width="9" height="5" viewBox="0 0 9 5"><path d="M0 0 H9 L4.5 5Z" fill="#6e6e6e"/></svg>
<svg style="left:1203px;top:671.5px" width="8" height="10" viewBox="0 0 8 10"><path d="M2 0.5 H6 V6 H2Z M0 6.5 H8 M4 6.5 V10" fill="none" stroke="#6e6e6e" stroke-width="1.2"/></svg>
<svg style="left:1221px;top:671.5px" width="9" height="9" viewBox="0 0 9 9"><path d="M0.7 0.7 L8.3 8.3 M8.3 0.7 L0.7 8.3" stroke="#6e6e6e" stroke-width="1.3"/></svg>
<div class="a" style="left:287px;top:687px;width:949px;height:24px;background:#f8f8f8"></div>
<div class="a" style="left:289px;top:688px;width:25px;height:22px;background:#e4e4e4;border:1px solid #ababab;border-radius:4px"></div>
<svg style="left:293px;top:693px" width="17" height="14" viewBox="0 0 17 14"><path d="M0.5 12.5 V0.5 H5 L6.5 2 H13 V5" fill="#fdd9b8" stroke="#f5994a" stroke-width="1"/><path d="M0.5 12.5 L3.5 5 H16.5 L13.5 12.5Z" fill="#fbc08a" stroke="#f5994a" stroke-width="1"/></svg>
<svg style="left:319px;top:691px" width="16" height="17" viewBox="319 691 16 17"><polyline points="320,695.5 323.5,692.3 329.5,698.3 332.8,695.2" fill="none" stroke="#222" stroke-width="1.1"/><polyline points="319.5,699.3 323.5,695.8 329.5,702.3 333.5,699" fill="none" stroke="#e63b3b" stroke-width="2"/><polyline points="320,703.8 323.5,700.6 329.5,706.5 332.8,703.3" fill="none" stroke="#222" stroke-width="1.1"/></svg>
<div class="vl" style="left:343px;top:690px;height:18px;background:#d0d0d0"></div>
<svg style="left:352px;top:692px" width="15" height="13" viewBox="0 0 15 13"><path d="M14.5 6.5 H1.5 M6.5 1 L1 6.5 L6.5 12" fill="none" stroke="#b5b5b5" stroke-width="1.3"/></svg>
<svg style="left:377px;top:692px" width="15" height="13" viewBox="0 0 15 13"><path d="M0.5 6.5 H13.5 M8.5 1 L14 6.5 L8.5 12" fill="none" stroke="#222" stroke-width="1.4"/></svg>
<svg style="left:402px;top:699px" width="7" height="5" viewBox="0 0 7 5"><path d="M0.8 0.8 L3.5 4 L6.2 0.8" fill="none" stroke="#222" stroke-width="1.5"/></svg>
<svg style="left:417px;top:692px" width="14" height="14" viewBox="0 0 14 14"><path d="M7 14 V1.5 M1.5 7 L7 1.2 L12.5 7" fill="none" stroke="#b5b5b5" stroke-width="1.3"/></svg>
<div class="a" style="left:445px;top:689px;width:782px;height:19px;background:#fff;border:1px solid #cdcdcd;border-radius:4px"></div>
<svg style="left:449px;top:692px" width="13" height="15" viewBox="0 0 13 15"><g fill="none" stroke="#e0620f" stroke-width="1.1"><ellipse cx="6.5" cy="2.5" rx="5.8" ry="2"/><path d="M0.7 2.5 V12.3 C0.7 13.6 3 14.4 6.5 14.4 C10 14.4 12.3 13.6 12.3 12.3 V2.5"/><path d="M0.7 5.8 C0.7 7 3 7.8 6.5 7.8 C10 7.8 12.3 7 12.3 5.8 M0.7 9.2 C0.7 10.4 3 11.2 6.5 11.2 C10 11.2 12.3 10.4 12.3 9.2"/></g></svg>
<div class="t " style="left:470.5px;top:692px;letter-spacing:-0.35px">Project Database: 'Project Database1'</div>
<svg style="left:670px;top:695px" width="5" height="8" viewBox="0 0 5 8"><path d="M0 0 L4.5 4 L0 8Z" fill="#333"/></svg>
<div class="a" style="left:287px;top:711px;width:949px;height:24px;background:#f7f7f7;border:1px solid #cdcdcd;border-right:none"></div>
<div class="vl" style="left:489px;top:712px;height:22px;background:#d2d2d2"></div>
<div class="vl" style="left:490px;top:712px;height:22px;background:#fff"></div>
<div class="vl" style="left:539px;top:712px;height:22px;background:#d2d2d2"></div>
<div class="vl" style="left:540px;top:712px;height:22px;background:#fff"></div>
<div class="vl" style="left:650px;top:712px;height:22px;background:#d2d2d2"></div>
<div class="vl" style="left:651px;top:712px;height:22px;background:#fff"></div>
<div class="vl" style="left:759px;top:712px;height:22px;background:#d2d2d2"></div>
<div class="vl" style="left:760px;top:712px;height:22px;background:#fff"></div>
<div class="vl" style="left:878px;top:712px;height:22px;background:#d2d2d2"></div>
<div class="vl" style="left:879px;top:712px;height:22px;background:#fff"></div>
<div class="t " style="left:291.75px;top:716px">Name</div>
<div class="t " style="left:493.5px;top:716px">Unit</div>
<div class="t " style="left:543.5px;top:716px">Comments</div>
<div class="t " style="left:654.25px;top:716px">Type</div>
<div class="t " style="left:763.4px;top:716px">Changed on</div>
<div class="t " style="left:883px;top:716px">Contents</div>
<div class="a" style="left:287px;top:735px;width:949px;height:224px;background:#fcfcfc"></div>
<svg style="left:292px;top:738px" width="14" height="12" viewBox="0 0 14 12"><path d="M0.5 0.5 H5 L6.5 2 H13.5 V11.5 H0.5Z" fill="#fdd9b8" stroke="#f5994a" stroke-width="1"/><path d="M0.5 3.5 H13.5" stroke="#f5994a" stroke-width="0.8"/></svg>
<div class="t " style="left:313.5px;top:738px">Measurement 1</div>
<div class="t " style="left:655.5px;top:738px">Folder</div>
<div class="t " style="left:765px;top:738px">21/11/2024 16:36:08</div>
<div class="t " style="left:885.3px;top:738px;letter-spacing:-0.12px">5 object(s); No value</div>
<svg style="left:292px;top:757px" width="14" height="12" viewBox="0 0 14 12"><path d="M0.5 0.5 H5 L6.5 2 H13.5 V11.5 H0.5Z" fill="#fdd9b8" stroke="#f5994a" stroke-width="1"/><path d="M0.5 3.5 H13.5" stroke="#f5994a" stroke-width="0.8"/></svg>
<div class="t " style="left:313.5px;top:757px">Measurement 2</div>
<div class="t " style="left:655.5px;top:757px">Folder</div>
<div class="t " style="left:765px;top:757px">21/11/2024 16:36:08</div>
<div class="t " style="left:885.3px;top:757px;letter-spacing:-0.12px">5 object(s); No value</div>
<svg style="left:292px;top:776px" width="14" height="12" viewBox="0 0 14 12"><path d="M0.5 0.5 H5 L6.5 2 H13.5 V11.5 H0.5Z" fill="#fdd9b8" stroke="#f5994a" stroke-width="1"/><path d="M0.5 3.5 H13.5" stroke="#f5994a" stroke-width="0.8"/></svg>
<div class="t " style="left:313.5px;top:776px">Measurement 3</div>
<div class="t " style="left:655.5px;top:776px">Folder</div>
<div class="t " style="left:765px;top:776px">21/11/2024 16:36:08</div>
<div class="t " style="left:885.3px;top:776px;letter-spacing:-0.12px">5 object(s); No value</div>
<svg style="left:292px;top:795px" width="14" height="12" viewBox="0 0 14 12"><path d="M0.5 0.5 H5 L6.5 2 H13.5 V11.5 H0.5Z" fill="#fdd9b8" stroke="#f5994a" stroke-width="1"/><path d="M0.5 3.5 H13.5" stroke="#f5994a" stroke-width="0.8"/></svg>
<div class="t " style="left:313.5px;top:795px">Measurement 4</div>
<div class="t " style="left:655.5px;top:795px">Folder</div>
<div class="t " style="left:765px;top:795px">21/11/2024 16:36:08</div>
<div class="t " style="left:885.3px;top:795px;letter-spacing:-0.12px">5 object(s); No value</div>
<svg style="left:292px;top:814px" width="14" height="12" viewBox="0 0 14 12"><path d="M0.5 0.5 H5 L6.5 2 H13.5 V11.5 H0.5Z" fill="#fdd9b8" stroke="#f5994a" stroke-width="1"/><path d="M0.5 3.5 H13.5" stroke="#f5994a" stroke-width="0.8"/></svg>
<div class="t " style="left:313.5px;top:814px">Measurement 5</div>
<div class="t " style="left:655.5px;top:814px">Folder</div>
<div class="t " style="left:765px;top:814px">21/11/2024 16:36:08</div>
<div class="t " style="left:885.3px;top:814px;letter-spacing:-0.12px">5 object(s); No value</div>
<svg style="left:292px;top:833px" width="14" height="12" viewBox="0 0 14 12"><path d="M0.5 0.5 H5 L6.5 2 H13.5 V11.5 H0.5Z" fill="#fdd9b8" stroke="#f5994a" stroke-width="1"/><path d="M0.5 3.5 H13.5" stroke="#f5994a" stroke-width="0.8"/></svg>
<div class="t " style="left:313.5px;top:833px">Measurement 6</div>
<div class="t " style="left:655.5px;top:833px">Folder</div>
<div class="t " style="left:765px;top:833px">21/11/2024 16:36:08</div>
<div class="t " style="left:885.3px;top:833px;letter-spacing:-0.12px">5 object(s); No value</div>
<svg style="left:292px;top:852px" width="14" height="12" viewBox="0 0 14 12"><path d="M0.5 0.5 H5 L6.5 2 H13.5 V11.5 H0.5Z" fill="#fdd9b8" stroke="#f5994a" stroke-width="1"/><path d="M0.5 3.5 H13.5" stroke="#f5994a" stroke-width="0.8"/></svg>
<div class="t " style="left:313.5px;top:852px">Measurement 7</div>
<div class="t " style="left:655.5px;top:852px">Folder</div>
<div class="t " style="left:765px;top:852px">21/11/2024 16:36:08</div>
<div class="t " style="left:885.3px;top:852px;letter-spacing:-0.12px">5 object(s); No value</div>
<svg style="left:291px;top:868px" width="17" height="17" viewBox="0 0 17 17"><g fill="none" stroke="#e0620f" stroke-width="1"><path d="M8.5 0.8 C10 -0.3 15.5 -0.3 16 1.2 C16 2.5 10 2.8 9 2"/><path d="M16 1.2 V8"/><path d="M9.5 4.2 C11 5 15 5 16 4"/></g><g fill="#fff" stroke="#1e88d6" stroke-width="1"><path d="M1.3 4.5 V2.3 C1.3 1.3 3.7 1.3 3.7 2.3 V4.5 M5.8 4.5 V2.3 C5.8 1.3 8.2 1.3 8.2 2.3 V4.5"/><rect x="0.5" y="4.5" width="4" height="3.6"/><rect x="5" y="4.5" width="4" height="3.6"/></g><polyline points="0,11.8 1.8,11.8 2.6,10.5 3.4,13.5 4.2,9.5 5,14.5 5.8,10 6.6,13 7.4,11 8.2,12.3 9.5,11.8" fill="none" stroke="#3a9a3f" stroke-width="1"/><circle cx="12" cy="11" r="4.3" fill="#e63b3b"/><path d="M9.6 11 H14.4" stroke="#fff" stroke-width="1.7"/></svg>
<div class="t " style="left:313.5px;top:871px">DataQuery</div>
<div class="t " style="left:655.5px;top:871px">Data Query</div>
<div class="t " style="left:765px;top:871px">21/11/2024 16:43:16</div>
<div class="t " style="left:885.3px;top:871px;letter-spacing:-0.12px">Data series with 7 64-bit integer values</div>
<svg style="left:291px;top:887px" width="17" height="17" viewBox="0 0 17 17"><g fill="none" stroke="#e0620f" stroke-width="1"><path d="M8.5 0.8 C10 -0.3 15.5 -0.3 16 1.2 C16 2.5 10 2.8 9 2"/><path d="M16 1.2 V8"/><path d="M9.5 4.2 C11 5 15 5 16 4"/></g><g fill="#fff" stroke="#1e88d6" stroke-width="1"><path d="M1.3 4.5 V2.3 C1.3 1.3 3.7 1.3 3.7 2.3 V4.5 M5.8 4.5 V2.3 C5.8 1.3 8.2 1.3 8.2 2.3 V4.5"/><rect x="0.5" y="4.5" width="4" height="3.6"/><rect x="5" y="4.5" width="4" height="3.6"/></g><polyline points="0,11.8 1.8,11.8 2.6,10.5 3.4,13.5 4.2,9.5 5,14.5 5.8,10 6.6,13 7.4,11 8.2,12.3 9.5,11.8" fill="none" stroke="#3a9a3f" stroke-width="1"/><circle cx="12" cy="11" r="4.3" fill="#e63b3b"/><path d="M9.6 11 H14.4" stroke="#fff" stroke-width="1.7"/></svg>
<div class="a" style="left:311px;top:887px;width:29px;height:19px;background:#ebebeb;border:1px dotted #444;border-radius:2px"></div>
<div class="t " style="left:313.5px;top:890px">Data</div>
<div class="t " style="left:655.5px;top:890px">Data Query</div>
<div class="t " style="left:765px;top:890px">21/11/2024 16:51:04</div>
<div class="t " style="left:885.3px;top:890px;letter-spacing:-0.12px">List with 7 element(s)</div>
<div class="a" style="left:287px;top:959px;width:949px;height:17px;background:#f0f0f0"></div>
<svg style="left:293px;top:964px" width="6" height="9" viewBox="0 0 6 9"><path d="M6 0 V9 L0.5 4.5Z" fill="#777"/></svg>
<div class="a" style="left:304px;top:963px;width:841px;height:9px;background:#cbcbcb;border-radius:5px"></div>
<svg style="left:1225px;top:964px" width="6" height="9" viewBox="0 0 6 9"><path d="M0 0 V9 L5.5 4.5Z" fill="#777"/></svg>
<!-- STATUS BAR -->
<div class="a" style="left:1px;top:976px;width:1598px;height:22px;background:#f7f7f7;border-top:1px solid #d4d4d4"></div>
<div class="t" style="left:17.5px;top:981px">Ready</div>
<svg style="left:1531px;top:981px" width="14" height="14" viewBox="0 0 14 14"><circle cx="3" cy="3" r="2.6" fill="#555"/><rect x="1.5" y="4.5" width="12" height="9" fill="#fff" stroke="#555" stroke-width="1"/><path d="M1.5 7 H13.5 M3.5 9.3 H5 M6.5 9.3 H8 M9.5 9.3 H11 M3.5 11.5 H5 M6.5 11.5 H8 M9.5 11.5 H11" stroke="#555" stroke-width="1"/></svg>
<svg style="left:1554px;top:981px" width="14" height="14" viewBox="0 0 14 14"><path d="M2 11 C3 9.5 2.7 7 3 5.5 C3.5 3 5 1.5 7 1.5 C9 1.5 10.5 3 11 5.5 C11.3 7 11 9.5 12 11 Z M5.5 12.3 C6 13.5 8 13.5 8.5 12.3" fill="none" stroke="#555" stroke-width="1"/></svg>
<svg style="left:1578px;top:988px" width="10" height="7" viewBox="0 0 10 7"><g fill="#aaa"><rect x="8" y="0" width="1.3" height="1.3"/><rect x="5" y="3" width="1.3" height="1.3"/><rect x="8" y="3" width="1.3" height="1.3"/><rect x="2" y="5.5" width="1.3" height="1.3"/><rect x="5" y="5.5" width="1.3" height="1.3"/><rect x="8" y="5.5" width="1.3" height="1.3"/></g></svg>

</body></html>
